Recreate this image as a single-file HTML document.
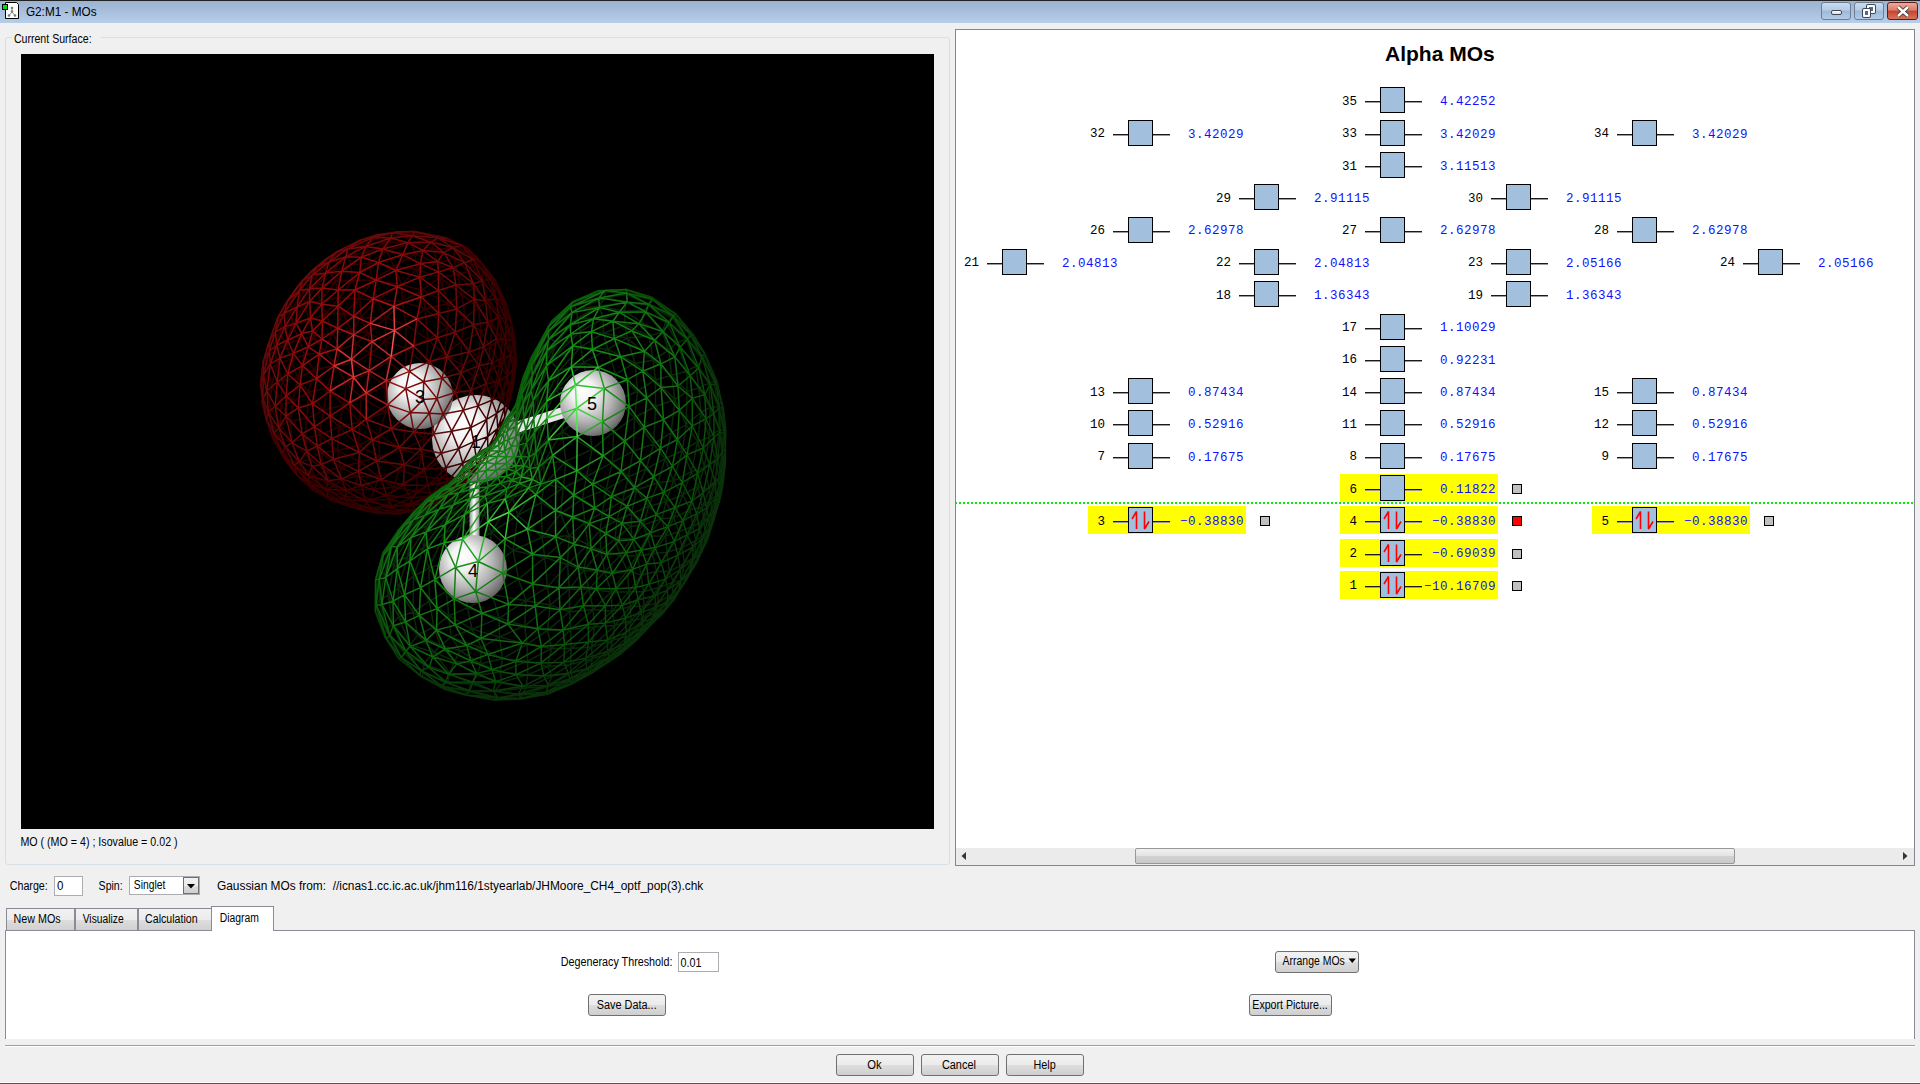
<!DOCTYPE html>
<html><head><meta charset="utf-8"><style>
*{margin:0;padding:0;box-sizing:border-box}
html,body{width:1920px;height:1084px;overflow:hidden;background:#f0f0f0;font-family:"Liberation Sans",sans-serif;font-size:12px;color:#000;position:relative}
.a{position:absolute}
.t{position:absolute;white-space:nowrap;line-height:14px}
#title{left:0;top:0;width:1920px;height:23px;background:linear-gradient(#9ab3d1,#b7cee8);border-top:1px solid #222}
#ttl{left:26px;top:4px;font-size:13px;color:#000;line-height:15px}
.wb{position:absolute;top:2px;height:18px;border:1px solid #6d7d92;border-radius:3px;background:linear-gradient(#c9dcef 0%,#b3cbe6 45%,#9db8d8 50%,#b2cbe6 100%)}
.wbc{background:linear-gradient(#eea99a 0%,#db7b68 45%,#c5452b 50%,#d9725c 100%);border-color:#5b1e1e}
#grp{left:5px;top:37px;width:945px;height:828px;border:1px solid #d5dfe5;border-radius:3px}
#canvas{left:21px;top:54px;width:913px;height:775px;background:#000;overflow:hidden}
#rp{left:955px;top:29px;width:960px;height:837px;border:1px solid #828790;background:#fff;overflow:hidden}
.yl{position:absolute;width:158px;height:28px;background:#ffff00}
.sq,.sqr{position:absolute;width:10px;height:10px;border:1px solid #000;background:#c0c0c0}
.sqr{background:#ff0000}
.ln{position:absolute;width:57px;height:2px;background:linear-gradient(#1a1a1a 50%,#9a9a9a 50%)}
.bx{position:absolute;width:25px;height:26px;border:1px solid #000;background:#a2c0de}
.ar{position:absolute}
.ar path{stroke:#f00;stroke-width:1.6;fill:none;stroke-linejoin:bevel}
.nm{position:absolute;width:60px;text-align:right;font-family:"Liberation Mono",monospace;font-size:12.5px;line-height:16px;color:#000;white-space:nowrap}
.en{position:absolute;width:100px;text-align:right;font-family:"Liberation Mono",monospace;font-size:12.5px;letter-spacing:0.5px;line-height:16px;color:#1010ff;white-space:nowrap}
.inp{position:absolute;background:#fff;border:1px solid #abadb3}
.btn{position:absolute;border:1px solid #707070;border-radius:3px;background:linear-gradient(#f2f2f2 0%,#ebebeb 50%,#dddddd 51%,#cfcfcf 100%);text-align:center;font-size:12px;line-height:19px}
.tab{position:absolute;top:908px;height:23px;border:1px solid #898c95;border-bottom:none;background:linear-gradient(#f2f2f2 0%,#ebebeb 50%,#dddddd 51%,#cfcfcf 100%);font-size:12px;line-height:20px;padding-left:7px}

</style></head><body>
<div id="title" class="a"></div>
<svg class="a" style="left:2px;top:2px" width="18" height="18"><path d="M3.5 0.5H14.5L16.5 2.5V16.5H3.5Z" fill="#fff" stroke="#000"/><circle cx="10" cy="6" r="1.3" fill="#777"/><circle cx="10" cy="9.5" r="1.3" fill="#777"/><circle cx="7" cy="13.5" r="1.3" fill="#777"/><circle cx="13" cy="13.5" r="1.3" fill="#777"/><path d="M10 6V10L7 13.5M10 10L13 13.5" stroke="#888" fill="none"/><rect x="0.5" y="2.5" width="5" height="5" fill="#00e000" stroke="#000"/></svg>
<div class="wb" style="left:1821px;width:30px"><div class="a" style="left:9px;top:7px;width:11px;height:5px;background:linear-gradient(#fff,#ddd);border:1px solid #3c4a5c;border-radius:2px"></div></div>
<div class="wb" style="left:1854px;width:30px"><div class="a" style="left:12px;top:2px;width:8px;height:8px;border:2px solid #fff;box-shadow:0 0 0 1px #3c4a5c;border-radius:1px;background:#5a6a7c"></div><div class="a" style="left:8px;top:6px;width:7px;height:8px;border:2px solid #fff;box-shadow:0 0 0 1px #3c4a5c;border-radius:1px;background:#5a6a7c"></div></div>
<div class="wb wbc" style="left:1887px;width:31px"><svg class="a" style="left:8px;top:2px" width="14" height="13"><path d="M2 2L12 11M12 2L2 11" stroke="#333" stroke-width="4"/><path d="M2 2L12 11M12 2L2 11" stroke="#fff" stroke-width="2.4"/></svg></div>
<div id="grp" class="a"></div>
<div class="a" style="left:12px;top:34px;width:89px;height:8px;background:#f0f0f0"></div>
<div id="canvas" class="a"><svg width="913" height="775" viewBox="21 54 913 775" style="position:absolute;left:0;top:0">
<defs><radialGradient id="sph" cx="0.42" cy="0.42" r="0.62" fx="0.33" fy="0.3"><stop offset="0" stop-color="#ffffff"/><stop offset="0.3" stop-color="#f2f2f2"/><stop offset="0.65" stop-color="#b4b4b4"/><stop offset="0.9" stop-color="#7c7c7c"/><stop offset="1" stop-color="#5e5e5e"/></radialGradient><linearGradient id="bnd" x1="0" y1="0" x2="1" y2="0"><stop offset="0" stop-color="#909090"/><stop offset="0.45" stop-color="#ffffff"/><stop offset="1" stop-color="#8a8a8a"/></linearGradient></defs>
<g fill="none" stroke-width="1.5">
<path stroke="#320000" d="M313.9 490.5L318.8 492.3M313.9 490.5L300 479M318.8 492.3L324.1 488.9M318.8 492.3L331.9 500.6M318.8 492.3L338.4 501.1M318.8 492.3L300 479M318.8 492.3L306.3 478.9M324.1 488.9L334.1 486.8M324.1 488.9L338.4 501.1M324.1 488.9L344.2 496.1M324.1 488.9L306.3 478.9M324.1 488.9L314 476.4M334.1 486.8L341.2 479M334.1 486.8L344.2 496.1M334.1 486.8L353.2 490M334.1 486.8L314 476.4M334.1 486.8L325.1 471.2M341.2 479L353.2 490M341.2 479L325.1 471.2M341.2 479L340.6 467.1M341.2 479L358.3 476.3M331.9 500.6L338.4 501.1M331.9 500.6L357.9 509.2M338.4 501.1L344.2 496.1M338.4 501.1L357.9 509.2M338.4 501.1L363.1 507.1M344.2 496.1L353.2 490M344.2 496.1L363.1 507.1M344.2 496.1L370.3 499.7M353.2 490L370.3 499.7M353.2 490L358.3 476.3M353.2 490L374.7 489M357.9 509.2L363.1 507.1M357.9 509.2L376.5 512.9M357.9 509.2L385.8 513M363.1 507.1L370.3 499.7M363.1 507.1L385.8 513M363.1 507.1L387.8 507.5M370.3 499.7L387.8 507.5M370.3 499.7L374.7 489M370.3 499.7L389.2 499.5M376.5 512.9L385.8 513M385.8 513L387.8 507.5M385.8 513L399.3 513.9M385.8 513L407.1 511M387.8 507.5L407.1 511M387.8 507.5L389.2 499.5M387.8 507.5L410 504M399.3 513.9L407.1 511M399.3 513.9L423.5 508.5M407.1 511L423.5 508.5M407.1 511L410 504M407.1 511L430 503.7M423.5 508.5L430 503.7M423.5 508.5L445.9 498.5M438.6 502.6L445.9 498.5M261.9 402.2L261.7 389.5M261.9 402.2L267.1 422.3M261.9 402.2L265 406.9M261.9 402.2L260.6 383.7M261.7 389.5L263.9 373.3M261.7 389.5L265 406.9M261.7 389.5L265.5 386.2M261.7 389.5L260.6 383.7M261.7 389.5L262.3 367.9M263.9 373.3L265.5 386.2M263.9 373.3L262.3 367.9M263.9 373.3L267.2 355.9M263.9 373.3L268.4 370.6M272.9 438.2L267.1 422.3M272.9 438.2L284.4 459.6M272.9 438.2L275.6 439.9M267.1 422.3L265 406.9M267.1 422.3L275.6 439.9M267.1 422.3L271.3 421.5M265 406.9L265.5 386.2M265 406.9L271.3 421.5M265 406.9L269.5 406M265.5 386.2L269.5 406M265.5 386.2L268.4 370.6M265.5 386.2L271.9 384.7M284.4 459.6L275.6 439.9M284.4 459.6L300 479M284.4 459.6L288.9 461.8M275.6 439.9L271.3 421.5M275.6 439.9L288.9 461.8M275.6 439.9L280.6 438.6M271.3 421.5L269.5 406M271.3 421.5L280.6 438.6M271.3 421.5L280.5 425.2M269.5 406L280.5 425.2M269.5 406L271.9 384.7M269.5 406L280.9 404.2M300 479L288.9 461.8M300 479L306.3 478.9M288.9 461.8L280.6 438.6M288.9 461.8L306.3 478.9M288.9 461.8L298.5 462.9M280.6 438.6L280.5 425.2M280.6 438.6L298.5 462.9M280.6 438.6L292 441.9M280.5 425.2L292 441.9M280.5 425.2L280.9 404.2M280.5 425.2L290.8 420.8M306.3 478.9L298.5 462.9M306.3 478.9L314 476.4M298.5 462.9L292 441.9M298.5 462.9L314 476.4M298.5 462.9L310.1 458.8M292 441.9L310.1 458.8M292 441.9L290.8 420.8M292 441.9L304.6 438.4M314 476.4L310.1 458.8M314 476.4L325.1 471.2M310.1 458.8L325.1 471.2M310.1 458.8L304.6 438.4M310.1 458.8L320.9 452.9M325.1 471.2L320.9 452.9M325.1 471.2L340.6 467.1M260.6 383.7L262.3 367.9M263.4 360.9L262.3 367.9M263.4 360.9L266.2 350.3M262.3 367.9L266.2 350.3M262.3 367.9L267.2 355.9M325.6 259.4L330.1 257.9M325.6 259.4L310.7 271.7M325.6 259.4L317.3 268.5M325.6 259.4L339.9 250M330.1 257.9L317.3 268.5M330.1 257.9L346.8 249M330.1 257.9L339.9 250M330.1 257.9L329.7 262.9M310.7 271.7L317.3 268.5M310.7 271.7L296.6 287.8M310.7 271.7L303.6 282.2M317.3 268.5L303.6 282.2M317.3 268.5L329.7 262.9M317.3 268.5L315.7 276.6M296.6 287.8L303.6 282.2M296.6 287.8L283.5 307M296.6 287.8L291.7 299.2M303.6 282.2L291.7 299.2M303.6 282.2L302.4 293M303.6 282.2L315.7 276.6M278.1 317L283.5 307M278.1 317L273.9 327.6M283.5 307L291.7 299.2M283.5 307L273.9 327.6M283.5 307L281.9 315.8M291.7 299.2L281.9 315.8M291.7 299.2L291.3 310.5M291.7 299.2L302.4 293M269.6 340.7L273.9 327.6M273.9 327.6L281.9 315.8M273.9 327.6L266.2 350.3M273.9 327.6L273.2 338.8M281.9 315.8L273.2 338.8M281.9 315.8L280.4 332.5M281.9 315.8L291.3 310.5M266.2 350.3L273.2 338.8M266.2 350.3L267.2 355.9M273.2 338.8L267.2 355.9M273.2 338.8L274.7 351.2M273.2 338.8L280.4 332.5M267.2 355.9L268.4 370.6M267.2 355.9L274.7 351.2M268.4 370.6L277.2 364.1M268.4 370.6L271.9 384.7M268.4 370.6L274.7 351.2M277.2 364.1L291.5 358.9M277.2 364.1L271.9 384.7M277.2 364.1L282.2 380.4M277.2 364.1L285.4 344.2M277.2 364.1L274.7 351.2M291.5 358.9L304.3 355.2M291.5 358.9L282.2 380.4M291.5 358.9L297.7 378M291.5 358.9L299.6 339.8M291.5 358.9L285.4 344.2M304.3 355.2L324.4 351.2M304.3 355.2L297.7 378M304.3 355.2L313.9 370.5M304.3 355.2L313.8 336.3M304.3 355.2L299.6 339.8M324.4 351.2L340.5 349.6M324.4 351.2L313.9 370.5M324.4 351.2L336.1 364.8M324.4 351.2L332.5 332.7M324.4 351.2L313.8 336.3M340.5 349.6L356.1 343.8M340.5 349.6L336.1 364.8M340.5 349.6L353.5 363.4M340.5 349.6L351.4 330.6M340.5 349.6L332.5 332.7M356.1 343.8L353.5 363.4M356.1 343.8L367.9 333.1M356.1 343.8L351.4 330.6M356.1 343.8L370.4 353.6M271.9 384.7L282.2 380.4M271.9 384.7L280.9 404.2M282.2 380.4L297.7 378M282.2 380.4L280.9 404.2M282.2 380.4L292.7 401.7M297.7 378L313.9 370.5M297.7 378L292.7 401.7M297.7 378L308.5 392M313.9 370.5L336.1 364.8M313.9 370.5L308.5 392M313.9 370.5L326.6 388.2M336.1 364.8L353.5 363.4M336.1 364.8L326.6 388.2M336.1 364.8L346.3 383.5M353.5 363.4L346.3 383.5M353.5 363.4L370.4 353.6M353.5 363.4L368.7 373.3M280.9 404.2L292.7 401.7M280.9 404.2L290.8 420.8M292.7 401.7L308.5 392M292.7 401.7L290.8 420.8M292.7 401.7L307 418.5M308.5 392L326.6 388.2M308.5 392L307 418.5M308.5 392L323.6 410.3M326.6 388.2L346.3 383.5M326.6 388.2L323.6 410.3M326.6 388.2L343.7 404.9M346.3 383.5L343.7 404.9M346.3 383.5L361.3 397.1M346.3 383.5L368.7 373.3M290.8 420.8L307 418.5M290.8 420.8L304.6 438.4M307 418.5L323.6 410.3M307 418.5L304.6 438.4M307 418.5L319.7 435M323.6 410.3L343.7 404.9M323.6 410.3L319.7 435M323.6 410.3L339 427.1M343.7 404.9L339 427.1M343.7 404.9L359.6 421.9M343.7 404.9L361.3 397.1M304.6 438.4L319.7 435M304.6 438.4L320.9 452.9M319.7 435L339 427.1M319.7 435L320.9 452.9M319.7 435L337.5 450.6M339 427.1L337.5 450.6M339 427.1L358.5 445.3M339 427.1L359.6 421.9M320.9 452.9L337.5 450.6M320.9 452.9L340.6 467.1M337.5 450.6L340.6 467.1M337.5 450.6L360.4 461.9M337.5 450.6L358.5 445.3M340.6 467.1L358.3 476.3M340.6 467.1L360.4 461.9M358.3 476.3L378.6 476.9M358.3 476.3L374.7 489M358.3 476.3L360.4 461.9M378.6 476.9L399.5 469.8M378.6 476.9L374.7 489M378.6 476.9L393.6 487.2M378.6 476.9L379.6 456.5M378.6 476.9L360.4 461.9M399.5 469.8L421.6 455.3M399.5 469.8L393.6 487.2M399.5 469.8L417.4 476.2M399.5 469.8L403.3 449.6M399.5 469.8L379.6 456.5M421.6 455.3L439.8 444.2M421.6 455.3L417.4 476.2M421.6 455.3L441.3 460.3M421.6 455.3L424.3 438.7M421.6 455.3L403.3 449.6M439.8 444.2L453.6 426.3M439.8 444.2L441.3 460.3M439.8 444.2L456.8 443.8M439.8 444.2L441.4 420.8M439.8 444.2L424.3 438.7M453.6 426.3L464.7 415.2M453.6 426.3L456.8 443.8M453.6 426.3L467.7 425.1M453.6 426.3L454.5 404.3M453.6 426.3L441.4 420.8M464.7 415.2L467.7 425.1M464.7 415.2L471.1 399.1M464.7 415.2L454.5 404.3M464.7 415.2L479 409.6M374.7 489L393.6 487.2M374.7 489L389.2 499.5M393.6 487.2L417.4 476.2M393.6 487.2L389.2 499.5M393.6 487.2L416.5 491.4M417.4 476.2L441.3 460.3M417.4 476.2L416.5 491.4M417.4 476.2L441.3 478.5M441.3 460.3L456.8 443.8M441.3 460.3L441.3 478.5M441.3 460.3L458.5 462M456.8 443.8L467.7 425.1M456.8 443.8L458.5 462M456.8 443.8L469.4 445.5M467.7 425.1L469.4 445.5M467.7 425.1L479 409.6M467.7 425.1L480.8 423.6M389.2 499.5L416.5 491.4M389.2 499.5L410 504M416.5 491.4L441.3 478.5M416.5 491.4L410 504M416.5 491.4L433.2 493.8M441.3 478.5L458.5 462M441.3 478.5L433.2 493.8M441.3 478.5L455.6 478.6M458.5 462L469.4 445.5M458.5 462L455.6 478.6M458.5 462L472.4 459.9M469.4 445.5L472.4 459.9M469.4 445.5L482 441.6M469.4 445.5L480.8 423.6M410 504L433.2 493.8M410 504L430 503.7M433.2 493.8L455.6 478.6M433.2 493.8L430 503.7M433.2 493.8L451.2 490.4M455.6 478.6L472.4 459.9M455.6 478.6L451.2 490.4M455.6 478.6L466.3 474.6M472.4 459.9L466.3 474.6M472.4 459.9L482.1 454.6M472.4 459.9L482 441.6M430 503.7L451.2 490.4M430 503.7L445.9 498.5M451.2 490.4L466.3 474.6M451.2 490.4L445.9 498.5M451.2 490.4L461.4 485.2M466.3 474.6L461.4 485.2M466.3 474.6L476.3 468.8M466.3 474.6L482.1 454.6M445.9 498.5L461.4 485.2M445.9 498.5L455.8 491.7M461.4 485.2L455.8 491.7M461.4 485.2L471 476.1M461.4 485.2L476.3 468.8M468.4 271.5L471.5 263.4M468.4 271.5L482.8 283.8M468.4 271.5L454.1 258.1M468.4 271.5L457.5 274.5M468.4 271.5L473.3 288.8M471.5 263.4L468.7 253.6M471.5 263.4L482.8 283.8M471.5 263.4L482.5 270.2M471.5 263.4L454.1 258.1M471.5 263.4L455.1 249.3M468.7 253.6L466.7 247.6M468.7 253.6L482.5 270.2M468.7 253.6L484.4 266.3M468.7 253.6L455.1 249.3M468.7 253.6L448.6 240.5M466.7 247.6L484.4 266.3M466.7 247.6L448.6 240.5M466.7 247.6L446.7 238.1M482.8 283.8L482.5 270.2M482.8 283.8L493.9 293.1M482.8 283.8L473.3 288.8M482.8 283.8L487.7 299.8M482.5 270.2L484.4 266.3M482.5 270.2L493.9 293.1M482.5 270.2L496.7 287.5M484.4 266.3L479.4 260.2M484.4 266.3L496.7 287.5M484.4 266.3L495.6 280.8M493.9 293.1L496.7 287.5M493.9 293.1L504.3 307.9M493.9 293.1L487.7 299.8M493.9 293.1L498.5 312.8M496.7 287.5L495.6 280.8M496.7 287.5L504.3 307.9M496.7 287.5L505.9 302.6M504.3 307.9L505.9 302.6M504.3 307.9L511.8 325.8M504.3 307.9L498.5 312.8M504.3 307.9L508.7 330M505.9 302.6L511.8 325.8M511.8 325.8L511 319.8M511.8 325.8L515.2 340.7M511.8 325.8L508.7 330M511.8 325.8L515.1 348.7M515.2 340.7L515.1 348.7M454.1 258.1L433.4 248.8M454.1 258.1L455.1 249.3M454.1 258.1L457.5 274.5M454.1 258.1L437.6 263.7M433.4 248.8L411.3 243M433.4 248.8L455.1 249.3M433.4 248.8L429.8 239.4M433.4 248.8L437.6 263.7M433.4 248.8L415.3 254.1M411.3 243L385.9 242M411.3 243L429.8 239.4M411.3 243L404.1 235.1M411.3 243L415.3 254.1M411.3 243L386.9 251.2M385.9 242L362.4 245.3M385.9 242L404.1 235.1M385.9 242L381.7 236.2M385.9 242L386.9 251.2M385.9 242L369.4 251.3M362.4 245.3L346.8 249M362.4 245.3L381.7 236.2M362.4 245.3L358.6 241.5M362.4 245.3L369.4 251.3M362.4 245.3L348.6 256.4M346.8 249L358.6 241.5M346.8 249L339.9 250M346.8 249L348.6 256.4M346.8 249L329.7 262.9M455.1 249.3L429.8 239.4M455.1 249.3L448.6 240.5M429.8 239.4L404.1 235.1M429.8 239.4L448.6 240.5M429.8 239.4L427.3 233.7M404.1 235.1L381.7 236.2M404.1 235.1L427.3 233.7M404.1 235.1L397.3 231.8M381.7 236.2L358.6 241.5M381.7 236.2L397.3 231.8M381.7 236.2L375.7 235.1M358.6 241.5L339.9 250M358.6 241.5L375.7 235.1M358.6 241.5L360.3 240.1M339.9 250L360.3 240.1M339.9 250L336.5 252M448.6 240.5L427.3 233.7M448.6 240.5L446.7 238.1M427.3 233.7L397.3 231.8M427.3 233.7L446.7 238.1M427.3 233.7L414.4 231.6M397.3 231.8L375.7 235.1M457.5 274.5L439.7 277.4M457.5 274.5L437.6 263.7M457.5 274.5L473.3 288.8M457.5 274.5L462 294.4M439.7 277.4L422 290.2M439.7 277.4L437.6 263.7M439.7 277.4L416.3 269.3M439.7 277.4L462 294.4M439.7 277.4L448.3 303.7M422 290.2L402.5 301.5M422 290.2L416.3 269.3M422 290.2L401.7 284.7M422 290.2L448.3 303.7M422 290.2L425.2 308.7M402.5 301.5L386 317.9M402.5 301.5L401.7 284.7M402.5 301.5L377.1 299.9M402.5 301.5L425.2 308.7M402.5 301.5L405.9 324.6M386 317.9L367.9 333.1M386 317.9L377.1 299.9M386 317.9L361 317.6M386 317.9L405.9 324.6M386 317.9L385 341.4M367.9 333.1L361 317.6M367.9 333.1L351.4 330.6M367.9 333.1L385 341.4M367.9 333.1L370.4 353.6M437.6 263.7L416.3 269.3M437.6 263.7L415.3 254.1M416.3 269.3L401.7 284.7M416.3 269.3L415.3 254.1M416.3 269.3L393.9 266.6M401.7 284.7L377.1 299.9M401.7 284.7L393.9 266.6M401.7 284.7L372.5 280.3M377.1 299.9L361 317.6M377.1 299.9L372.5 280.3M377.1 299.9L360 299.1M361 317.6L351.4 330.6M361 317.6L360 299.1M361 317.6L343.1 313.6M351.4 330.6L343.1 313.6M351.4 330.6L332.5 332.7M415.3 254.1L393.9 266.6M415.3 254.1L386.9 251.2M393.9 266.6L372.5 280.3M393.9 266.6L386.9 251.2M393.9 266.6L369.2 263.3M372.5 280.3L360 299.1M372.5 280.3L369.2 263.3M372.5 280.3L352.5 280.3M360 299.1L343.1 313.6M360 299.1L352.5 280.3M360 299.1L339 297.8M343.1 313.6L339 297.8M343.1 313.6L332.5 332.7M343.1 313.6L326.2 313.4M386.9 251.2L369.2 263.3M386.9 251.2L369.4 251.3M369.2 263.3L352.5 280.3M369.2 263.3L369.4 251.3M369.2 263.3L350.6 264.8M352.5 280.3L339 297.8M352.5 280.3L350.6 264.8M352.5 280.3L335.6 281.8M339 297.8L335.6 281.8M339 297.8L326.2 313.4M339 297.8L320.1 300.9M369.4 251.3L350.6 264.8M369.4 251.3L348.6 256.4M350.6 264.8L335.6 281.8M350.6 264.8L348.6 256.4M350.6 264.8L329.7 272M335.6 281.8L329.7 272M335.6 281.8L320.1 300.9M335.6 281.8L316.5 285.8M348.6 256.4L329.7 272M348.6 256.4L329.7 262.9M329.7 272L329.7 262.9M329.7 272L316.5 285.8M329.7 272L315.7 276.6M329.7 262.9L315.7 276.6M473.3 288.8L478.4 307.9M473.3 288.8L462 294.4M473.3 288.8L487.7 299.8M478.4 307.9L481.2 331.9M478.4 307.9L462 294.4M478.4 307.9L464.9 317.8M478.4 307.9L487.7 299.8M478.4 307.9L492.1 324M481.2 331.9L478.3 357.3M481.2 331.9L464.9 317.8M481.2 331.9L461.4 341.6M481.2 331.9L492.1 324M481.2 331.9L490.3 346M478.3 357.3L473.8 376.8M478.3 357.3L461.4 341.6M478.3 357.3L461.6 364.9M478.3 357.3L490.3 346M478.3 357.3L486.8 371.6M473.8 376.8L471.1 399.1M473.8 376.8L461.6 364.9M473.8 376.8L458.8 388.4M473.8 376.8L486.8 371.6M473.8 376.8L484.2 391.6M471.1 399.1L458.8 388.4M471.1 399.1L454.5 404.3M471.1 399.1L484.2 391.6M471.1 399.1L479 409.6M462 294.4L464.9 317.8M462 294.4L448.3 303.7M464.9 317.8L461.4 341.6M464.9 317.8L448.3 303.7M464.9 317.8L447.3 327.7M461.4 341.6L461.6 364.9M461.4 341.6L447.3 327.7M461.4 341.6L444.6 354.2M461.6 364.9L458.8 388.4M461.6 364.9L444.6 354.2M461.6 364.9L445 374.7M458.8 388.4L454.5 404.3M458.8 388.4L445 374.7M458.8 388.4L441.4 396.4M454.5 404.3L441.4 396.4M454.5 404.3L441.4 420.8M448.3 303.7L447.3 327.7M448.3 303.7L425.2 308.7M447.3 327.7L444.6 354.2M447.3 327.7L425.2 308.7M447.3 327.7L427.9 339.6M444.6 354.2L445 374.7M444.6 354.2L427.9 339.6M444.6 354.2L426.1 365.2M445 374.7L441.4 396.4M445 374.7L426.1 365.2M445 374.7L423.6 387.6M441.4 396.4L423.6 387.6M441.4 396.4L441.4 420.8M441.4 396.4L424.9 409.5M425.2 308.7L427.9 339.6M425.2 308.7L405.9 324.6M427.9 339.6L426.1 365.2M427.9 339.6L405.9 324.6M427.9 339.6L406 348.2M426.1 365.2L423.6 387.6M426.1 365.2L406 348.2M426.1 365.2L406 375.5M423.6 387.6L406 375.5M423.6 387.6L424.9 409.5M423.6 387.6L405.7 398M405.9 324.6L406 348.2M405.9 324.6L385 341.4M406 348.2L406 375.5M406 348.2L385 341.4M406 348.2L388.3 361.7M406 375.5L388.3 361.7M406 375.5L405.7 398M406 375.5L385 386.2M385 341.4L388.3 361.7M385 341.4L370.4 353.6M388.3 361.7L370.4 353.6M388.3 361.7L385 386.2M388.3 361.7L368.7 373.3M370.4 353.6L368.7 373.3M487.7 299.8L498.5 312.8M487.7 299.8L492.1 324M498.5 312.8L508.7 330M498.5 312.8L492.1 324M498.5 312.8L502.1 340M508.7 330L515.1 348.7M508.7 330L502.1 340M508.7 330L510.2 354.4M515.1 348.7L516 363.3M515.1 348.7L510.2 354.4M515.1 348.7L513.7 371.2M516 363.3L513.7 371.2M516 363.3L513.5 384.5M492.1 324L502.1 340M492.1 324L490.3 346M502.1 340L510.2 354.4M502.1 340L490.3 346M502.1 340L500 364.5M510.2 354.4L513.7 371.2M510.2 354.4L500 364.5M510.2 354.4L506.9 375.9M513.7 371.2L513.5 384.5M513.7 371.2L506.9 375.9M513.7 371.2L508.3 393.8M513.5 384.5L508.3 393.8M513.5 384.5L508.5 404.9M490.3 346L500 364.5M490.3 346L486.8 371.6M500 364.5L506.9 375.9M500 364.5L486.8 371.6M500 364.5L495.6 384.2M506.9 375.9L508.3 393.8M506.9 375.9L495.6 384.2M506.9 375.9L500 400M508.3 393.8L500 400M508.3 393.8L508.5 404.9M508.3 393.8L503 413.8M486.8 371.6L495.6 384.2M486.8 371.6L484.2 391.6M495.6 384.2L500 400M495.6 384.2L484.2 391.6M495.6 384.2L492.3 406M500 400L492.3 406M500 400L503 413.8M500 400L493.9 419.9M484.2 391.6L492.3 406M484.2 391.6L479 409.6M492.3 406L479 409.6M492.3 406L493.9 419.9M492.3 406L480.8 423.6M479 409.6L480.8 423.6M332.5 332.7L313.8 336.3M332.5 332.7L326.2 313.4M313.8 336.3L299.6 339.8M313.8 336.3L326.2 313.4M313.8 336.3L309 320.5M299.6 339.8L285.4 344.2M299.6 339.8L309 320.5M299.6 339.8L292.3 324.8M285.4 344.2L274.7 351.2M285.4 344.2L292.3 324.8M285.4 344.2L280.4 332.5M274.7 351.2L280.4 332.5M326.2 313.4L309 320.5M326.2 313.4L320.1 300.9M309 320.5L292.3 324.8M309 320.5L320.1 300.9M309 320.5L304.8 303.7M292.3 324.8L280.4 332.5M292.3 324.8L304.8 303.7M292.3 324.8L291.3 310.5M280.4 332.5L291.3 310.5M320.1 300.9L304.8 303.7M320.1 300.9L316.5 285.8M304.8 303.7L291.3 310.5M304.8 303.7L316.5 285.8M304.8 303.7L302.4 293M291.3 310.5L302.4 293M316.5 285.8L302.4 293M316.5 285.8L315.7 276.6M302.4 293L315.7 276.6M441.4 420.8L424.3 438.7M441.4 420.8L424.9 409.5M424.3 438.7L403.3 449.6M424.3 438.7L424.9 409.5M424.3 438.7L405.3 423.1M403.3 449.6L379.6 456.5M403.3 449.6L405.3 423.1M403.3 449.6L378.5 435.4M379.6 456.5L360.4 461.9M379.6 456.5L378.5 435.4M379.6 456.5L358.5 445.3M360.4 461.9L358.5 445.3M424.9 409.5L405.3 423.1M424.9 409.5L405.7 398M405.3 423.1L378.5 435.4M405.3 423.1L405.7 398M405.3 423.1L385.8 412.1M378.5 435.4L358.5 445.3M378.5 435.4L385.8 412.1M378.5 435.4L359.6 421.9M358.5 445.3L359.6 421.9M405.7 398L385.8 412.1M405.7 398L385 386.2M385.8 412.1L359.6 421.9M385.8 412.1L385 386.2M385.8 412.1L361.3 397.1M359.6 421.9L361.3 397.1M385 386.2L361.3 397.1M385 386.2L368.7 373.3M361.3 397.1L368.7 373.3M510.5 396.8L508.5 404.9M496.1 437.2L492 445.1M483.9 459.5L492 445.1M483.9 459.5L476.3 468.8M471 476.1L476.3 468.8M508.5 404.9L500.5 428.3M508.5 404.9L503 413.8M500.5 428.3L492 445.1M500.5 428.3L503 413.8M500.5 428.3L493.2 434.5M492 445.1L476.3 468.8M492 445.1L493.2 434.5M492 445.1L482.1 454.6M476.3 468.8L482.1 454.6M503 413.8L493.2 434.5M503 413.8L493.9 419.9M493.2 434.5L482.1 454.6M493.2 434.5L493.9 419.9M493.2 434.5L482 441.6M482.1 454.6L482 441.6M493.9 419.9L482 441.6M493.9 419.9L480.8 423.6M482 441.6L480.8 423.6"/>
<path stroke="#0a280a" d="M620.9 653.6L609.8 661.4M620.9 653.6L620.6 652.7M636.2 640.5L620.6 652.7M636.2 640.5L647.1 628.9M636.2 640.5L638.6 636M445.3 689.6L439.6 685.5M445.3 689.6L462.8 694.5M445.3 689.6L422 677.2M439.6 685.5L447.6 682.6M439.6 685.5L462.8 694.5M439.6 685.5L468.7 691.6M439.6 685.5L422 677.2M439.6 685.5L423.5 672.4M447.6 682.6L449.7 673.3M447.6 682.6L468.7 691.6M447.6 682.6L470.9 683.9M447.6 682.6L423.5 672.4M447.6 682.6L423.6 664M449.7 673.3L454.7 661.2M449.7 673.3L470.9 683.9M449.7 673.3L477.4 675.4M449.7 673.3L423.6 664M449.7 673.3L434.3 652.1M454.7 661.2L460.3 650.6M454.7 661.2L477.4 675.4M454.7 661.2L480.4 663.8M454.7 661.2L434.3 652.1M454.7 661.2L440.5 645.5M460.3 650.6L480.4 663.8M460.3 650.6L440.5 645.5M460.3 650.6L451.1 637.2M460.3 650.6L481.3 647.6M462.8 694.5L468.7 691.6M462.8 694.5L494.5 699.9M462.8 694.5L495.1 698M468.7 691.6L470.9 683.9M468.7 691.6L495.1 698M468.7 691.6L494.8 691.2M470.9 683.9L477.4 675.4M470.9 683.9L494.8 691.2M470.9 683.9L502.2 682.1M477.4 675.4L480.4 663.8M477.4 675.4L502.2 682.1M477.4 675.4L500.1 672M480.4 663.8L500.1 672M480.4 663.8L481.3 647.6M480.4 663.8L502.5 658.8M494.5 699.9L495.1 698M494.5 699.9L521.7 698.9M495.1 698L494.8 691.2M495.1 698L521.7 698.9M495.1 698L521.8 695.1M494.8 691.2L502.2 682.1M494.8 691.2L521.8 695.1M494.8 691.2L526 688M502.2 682.1L500.1 672M502.2 682.1L526 688M502.2 682.1L527.6 674.8M500.1 672L527.6 674.8M500.1 672L502.5 658.8M500.1 672L527.6 661.1M521.7 698.9L521.8 695.1M521.7 698.9L547.8 694.1M521.7 698.9L545.7 693.3M521.8 695.1L526 688M521.8 695.1L545.7 693.3M521.8 695.1L547.4 686.7M526 688L527.6 674.8M526 688L547.4 686.7M526 688L552.1 676.2M527.6 674.8L552.1 676.2M527.6 674.8L527.6 661.1M527.6 674.8L547.7 666.5M547.8 694.1L545.7 693.3M547.8 694.1L572 684.1M545.7 693.3L547.4 686.7M545.7 693.3L572 684.1M545.7 693.3L573 680.6M547.4 686.7L552.1 676.2M547.4 686.7L573 680.6M547.4 686.7L571.3 673.1M552.1 676.2L571.3 673.1M552.1 676.2L547.7 666.5M552.1 676.2L570.4 664.4M572 684.1L573 680.6M572 684.1L591.3 673.3M572 684.1L591.7 671.9M573 680.6L571.3 673.1M573 680.6L591.7 671.9M573 680.6L590.4 668M571.3 673.1L590.4 668M571.3 673.1L570.4 664.4M571.3 673.1L592.3 658.8M591.3 673.3L591.7 671.9M591.3 673.3L609.8 661.4M591.7 671.9L590.4 668M591.7 671.9L609.8 661.4M591.7 671.9L607.8 659.5M590.4 668L607.8 659.5M590.4 668L592.3 658.8M590.4 668L609.3 653M609.8 661.4L607.8 659.5M609.8 661.4L620.6 652.7M607.8 659.5L620.6 652.7M607.8 659.5L609.3 653M607.8 659.5L624.3 646.6M620.6 652.7L624.3 646.6M620.6 652.7L638.6 636M411.2 514.9L424.5 501M411.2 514.9L397.2 531.4M411.2 514.9L414.1 512.2M424.5 501L414.1 512.2M424.5 501L441.8 487.9M424.5 501L430.7 496.4M383.1 552.6L397.2 531.4M383.1 552.6L375.6 578.7M383.1 552.6L384 552.3M397.2 531.4L414.1 512.2M397.2 531.4L384 552.3M397.2 531.4L399.3 530.8M414.1 512.2L399.3 530.8M414.1 512.2L430.7 496.4M414.1 512.2L423 504.6M375.3 611.4L375.6 578.7M375.3 611.4L384.4 636M375.3 611.4L376 606.8M375.6 578.7L384 552.3M375.6 578.7L376 606.8M375.6 578.7L378.8 574.9M384 552.3L399.3 530.8M384 552.3L378.8 574.9M384 552.3L390.5 547M399.3 530.8L390.5 547M399.3 530.8L423 504.6M399.3 530.8L412.3 519.4M398.7 658.7L384.4 636M398.7 658.7L422 677.2M398.7 658.7L400.4 657.3M384.4 636L376 606.8M384.4 636L400.4 657.3M384.4 636L385.9 629.9M376 606.8L378.8 574.9M376 606.8L385.9 629.9M376 606.8L379.5 599.8M378.8 574.9L390.5 547M378.8 574.9L379.5 599.8M378.8 574.9L384.9 572.7M390.5 547L384.9 572.7M390.5 547L412.3 519.4M390.5 547L399.8 540.7M422 677.2L400.4 657.3M422 677.2L423.5 672.4M400.4 657.3L385.9 629.9M400.4 657.3L423.5 672.4M400.4 657.3L404.7 653.5M385.9 629.9L379.5 599.8M385.9 629.9L404.7 653.5M385.9 629.9L392.3 624.1M379.5 599.8L384.9 572.7M379.5 599.8L392.3 624.1M379.5 599.8L388.3 595.1M384.9 572.7L388.3 595.1M384.9 572.7L399.8 540.7M384.9 572.7L394.4 562M423.5 672.4L404.7 653.5M423.5 672.4L423.6 664M404.7 653.5L392.3 624.1M404.7 653.5L423.6 664M404.7 653.5L410.1 645.3M392.3 624.1L388.3 595.1M392.3 624.1L410.1 645.3M392.3 624.1L398.6 616.7M388.3 595.1L398.6 616.7M388.3 595.1L394.4 562M388.3 595.1L398.4 588.4M423.6 664L410.1 645.3M423.6 664L434.3 652.1M410.1 645.3L398.6 616.7M410.1 645.3L434.3 652.1M410.1 645.3L417.7 634.9M398.6 616.7L417.7 634.9M398.6 616.7L398.4 588.4M398.6 616.7L413 612.1M434.3 652.1L417.7 634.9M434.3 652.1L440.5 645.5M417.7 634.9L440.5 645.5M417.7 634.9L413 612.1M417.7 634.9L433.9 627.3M440.5 645.5L433.9 627.3M440.5 645.5L451.1 637.2M647.1 628.9L662.6 613.5M647.1 628.9L638.6 636M647.1 628.9L652.8 620.8M662.6 613.5L673.5 600.3M662.6 613.5L663.9 609.9M662.6 613.5L652.8 620.8M673.5 600.3L686.4 579.9M673.5 600.3L679 590.4M673.5 600.3L663.9 609.9M686.4 579.9L696.9 562M686.4 579.9L690 571.6M686.4 579.9L679 590.4M696.9 562L703.8 546.8M696.9 562L690 571.6M707.7 539.1L711.1 527.5M707.7 539.1L703.8 546.8M713.6 520.6L717.5 506.2M713.6 520.6L711.1 527.5M719.3 501.5L721.9 487.4M719.3 501.5L717.5 506.2M722.8 485.6L721.9 487.4M505.9 419.3L504.4 421.9M500.9 427.7L504.4 421.9M500.9 427.7L499.7 430.8M497 436.8L495.9 441.8M497 436.8L499.7 430.8M491.2 445.6L487.4 447.9M491.2 445.6L495.9 441.8M481.3 451L472.5 457.6M481.3 451L476.5 454.9M481.3 451L487.4 447.9M472.5 457.6L462.8 467.8M472.5 457.6L468.3 462.4M472.5 457.6L476.5 454.9M462.8 467.8L455.8 477.8M462.8 467.8L459.5 473.1M462.8 467.8L468.3 462.4M455.8 477.8L441.8 487.9M455.8 477.8L450.3 483.7M455.8 477.8L459.5 473.1M441.8 487.9L430.7 496.4M441.8 487.9L450.3 483.7M430.7 496.4L440.9 490.7M430.7 496.4L423 504.6M430.7 496.4L450.3 483.7M440.9 490.7L454.1 485.3M440.9 490.7L423 504.6M440.9 490.7L431.9 499.6M440.9 490.7L457.8 479.4M440.9 490.7L450.3 483.7M454.1 485.3L465.2 481.1M454.1 485.3L431.9 499.6M454.1 485.3L442.8 495.5M454.1 485.3L465.1 473.5M454.1 485.3L457.8 479.4M465.2 481.1L474.3 477.9M465.2 481.1L442.8 495.5M465.2 481.1L459.2 488.6M465.2 481.1L472.1 471.5M465.2 481.1L465.1 473.5M474.3 477.9L484.7 475.3M474.3 477.9L459.2 488.6M474.3 477.9L473.5 486.2M474.3 477.9L482.8 467.7M474.3 477.9L472.1 471.5M484.7 475.3L492.8 473.2M484.7 475.3L473.5 486.2M484.7 475.3L488.9 481.3M484.7 475.3L493.4 465.7M484.7 475.3L482.8 467.7M492.8 473.2L503.6 470M492.8 473.2L488.9 481.3M492.8 473.2L498.6 479M492.8 473.2L502.9 465.2M492.8 473.2L493.4 465.7M503.6 470L513.1 470.2M503.6 470L498.6 479M503.6 470L508.8 476.4M503.6 470L512.1 464.7M503.6 470L502.9 465.2M513.1 470.2L508.8 476.4M513.1 470.2L521.5 465.7M513.1 470.2L512.1 464.7M513.1 470.2L521.1 473.5M423 504.6L431.9 499.6M423 504.6L412.3 519.4M431.9 499.6L442.8 495.5M431.9 499.6L412.3 519.4M431.9 499.6L421 514.8M442.8 495.5L459.2 488.6M442.8 495.5L421 514.8M442.8 495.5L438.1 504M459.2 488.6L473.5 486.2M459.2 488.6L438.1 504M459.2 488.6L450.3 502.5M473.5 486.2L488.9 481.3M473.5 486.2L450.3 502.5M473.5 486.2L471 494.3M488.9 481.3L498.6 479M488.9 481.3L471 494.3M488.9 481.3L487.6 489.7M498.6 479L508.8 476.4M498.6 479L487.6 489.7M498.6 479L506 484.4M508.8 476.4L506 484.4M508.8 476.4L521.1 473.5M508.8 476.4L516.1 480.7M412.3 519.4L421 514.8M412.3 519.4L399.8 540.7M421 514.8L438.1 504M421 514.8L399.8 540.7M421 514.8L411.6 531.7M438.1 504L450.3 502.5M438.1 504L411.6 531.7M438.1 504L427.2 525.7M450.3 502.5L471 494.3M450.3 502.5L427.2 525.7M450.3 502.5L447.4 515.7M471 494.3L487.6 489.7M471 494.3L447.4 515.7M471 494.3L465 507.2M487.6 489.7L506 484.4M487.6 489.7L465 507.2M487.6 489.7L483.4 500.2M506 484.4L483.4 500.2M506 484.4L503.3 493.8M506 484.4L516.1 480.7M399.8 540.7L411.6 531.7M399.8 540.7L394.4 562M411.6 531.7L427.2 525.7M411.6 531.7L394.4 562M411.6 531.7L407.3 556.9M427.2 525.7L447.4 515.7M427.2 525.7L407.3 556.9M427.2 525.7L423.2 547.7M447.4 515.7L465 507.2M447.4 515.7L423.2 547.7M447.4 515.7L444.5 533.6M465 507.2L483.4 500.2M465 507.2L444.5 533.6M465 507.2L461.9 524.4M483.4 500.2L461.9 524.4M483.4 500.2L484.5 513.8M483.4 500.2L503.3 493.8M394.4 562L407.3 556.9M394.4 562L398.4 588.4M407.3 556.9L423.2 547.7M407.3 556.9L398.4 588.4M407.3 556.9L413.6 576.2M423.2 547.7L444.5 533.6M423.2 547.7L413.6 576.2M423.2 547.7L428.9 568.4M444.5 533.6L461.9 524.4M444.5 533.6L428.9 568.4M444.5 533.6L447.7 561.1M461.9 524.4L447.7 561.1M461.9 524.4L471.3 544.3M461.9 524.4L484.5 513.8M398.4 588.4L413.6 576.2M398.4 588.4L413 612.1M413.6 576.2L428.9 568.4M413.6 576.2L413 612.1M413.6 576.2L429.3 601.1M428.9 568.4L447.7 561.1M428.9 568.4L429.3 601.1M428.9 568.4L446.2 591.7M447.7 561.1L446.2 591.7M447.7 561.1L463.4 580M447.7 561.1L471.3 544.3M413 612.1L429.3 601.1M413 612.1L433.9 627.3M429.3 601.1L446.2 591.7M429.3 601.1L433.9 627.3M429.3 601.1L448.9 615.7M446.2 591.7L448.9 615.7M446.2 591.7L467.5 607.9M446.2 591.7L463.4 580M433.9 627.3L448.9 615.7M433.9 627.3L451.1 637.2M448.9 615.7L451.1 637.2M448.9 615.7L472 629.1M448.9 615.7L467.5 607.9M451.1 637.2L481.3 647.6M451.1 637.2L472 629.1M481.3 647.6L499.5 637M481.3 647.6L502.5 658.8M481.3 647.6L472 629.1M499.5 637L524.7 625.8M499.5 637L502.5 658.8M499.5 637L527 644.3M499.5 637L499.1 618.3M499.5 637L472 629.1M524.7 625.8L550.3 605.1M524.7 625.8L527 644.3M524.7 625.8L547.5 630.4M524.7 625.8L526 600.7M524.7 625.8L499.1 618.3M550.3 605.1L569.3 589M550.3 605.1L547.5 630.4M550.3 605.1L569.6 611.9M550.3 605.1L547.4 587.1M550.3 605.1L526 600.7M569.3 589L584 570.3M569.3 589L569.6 611.9M569.3 589L589.1 589.1M569.3 589L567.5 564.5M569.3 589L547.4 587.1M584 570.3L600.6 550.5M584 570.3L589.1 589.1M584 570.3L604.6 571.7M584 570.3L587.8 544.5M584 570.3L567.5 564.5M600.6 550.5L615 539M600.6 550.5L604.6 571.7M600.6 550.5L620.1 555.5M600.6 550.5L600.2 529.9M600.6 550.5L587.8 544.5M615 539L631.1 526.3M615 539L620.1 555.5M615 539L631.5 538.6M615 539L617 520M615 539L600.2 529.9M631.1 526.3L631.5 538.6M631.1 526.3L631.6 513.8M631.1 526.3L617 520M631.1 526.3L643.2 524.9M502.5 658.8L527 644.3M502.5 658.8L527.6 661.1M527 644.3L547.5 630.4M527 644.3L527.6 661.1M527 644.3L551.6 648.4M547.5 630.4L569.6 611.9M547.5 630.4L551.6 648.4M547.5 630.4L570.7 629.6M569.6 611.9L589.1 589.1M569.6 611.9L570.7 629.6M569.6 611.9L593 609.6M589.1 589.1L604.6 571.7M589.1 589.1L593 609.6M589.1 589.1L611.2 592M604.6 571.7L620.1 555.5M604.6 571.7L611.2 592M604.6 571.7L627.5 570.4M620.1 555.5L631.5 538.6M620.1 555.5L627.5 570.4M620.1 555.5L637.1 556M631.5 538.6L637.1 556M631.5 538.6L643.2 524.9M631.5 538.6L647.1 536M527.6 661.1L551.6 648.4M527.6 661.1L547.7 666.5M551.6 648.4L570.7 629.6M551.6 648.4L547.7 666.5M551.6 648.4L571.2 648.6M570.7 629.6L593 609.6M570.7 629.6L571.2 648.6M570.7 629.6L594.6 627.1M593 609.6L611.2 592M593 609.6L594.6 627.1M593 609.6L612 611.3M611.2 592L627.5 570.4M611.2 592L612 611.3M611.2 592L628.8 591.7M627.5 570.4L637.1 556M627.5 570.4L628.8 591.7M627.5 570.4L641.2 575.1M637.1 556L641.2 575.1M637.1 556L652.3 553.8M637.1 556L647.1 536M547.7 666.5L571.2 648.6M547.7 666.5L570.4 664.4M571.2 648.6L594.6 627.1M571.2 648.6L570.4 664.4M571.2 648.6L591.6 647.1M594.6 627.1L612 611.3M594.6 627.1L591.6 647.1M594.6 627.1L614.8 625.5M612 611.3L628.8 591.7M612 611.3L614.8 625.5M612 611.3L630.2 606.7M628.8 591.7L641.2 575.1M628.8 591.7L630.2 606.7M628.8 591.7L643.4 591.7M641.2 575.1L643.4 591.7M641.2 575.1L656.5 571.6M641.2 575.1L652.3 553.8M570.4 664.4L591.6 647.1M570.4 664.4L592.3 658.8M591.6 647.1L614.8 625.5M591.6 647.1L592.3 658.8M591.6 647.1L612.7 640.3M614.8 625.5L630.2 606.7M614.8 625.5L612.7 640.3M614.8 625.5L631.1 620.8M630.2 606.7L643.4 591.7M630.2 606.7L631.1 620.8M630.2 606.7L643.9 606.1M643.4 591.7L643.9 606.1M643.4 591.7L659.1 587.6M643.4 591.7L656.5 571.6M592.3 658.8L612.7 640.3M592.3 658.8L609.3 653M612.7 640.3L631.1 620.8M612.7 640.3L609.3 653M612.7 640.3L628.8 635.9M631.1 620.8L643.9 606.1M631.1 620.8L628.8 635.9M631.1 620.8L643.3 618.2M643.9 606.1L643.3 618.2M643.9 606.1L657.4 603.1M643.9 606.1L659.1 587.6M609.3 653L628.8 635.9M609.3 653L624.3 646.6M628.8 635.9L643.3 618.2M628.8 635.9L624.3 646.6M628.8 635.9L642.3 627.3M643.3 618.2L642.3 627.3M643.3 618.2L656.4 612.2M643.3 618.2L657.4 603.1M624.3 646.6L642.3 627.3M624.3 646.6L638.6 636M642.3 627.3L638.6 636M642.3 627.3L652.8 620.8M642.3 627.3L656.4 612.2M638.6 636L652.8 620.8M641.8 322.4L643.9 310.3M641.8 322.4L662.3 332.1M641.8 322.4L624.4 311.2M641.8 322.4L625.3 325M641.8 322.4L649.1 335.9M643.9 310.3L648.9 305.3M643.9 310.3L662.3 332.1M643.9 310.3L665.7 322.4M643.9 310.3L624.4 311.2M643.9 310.3L626 302.8M648.9 305.3L653.1 299.8M648.9 305.3L665.7 322.4M648.9 305.3L672.9 318M648.9 305.3L626 302.8M648.9 305.3L627.3 294.4M653.1 299.8L652 297.3M653.1 299.8L672.9 318M653.1 299.8L676.4 315M653.1 299.8L627.3 294.4M653.1 299.8L626.6 290M652 297.3L676.4 315M652 297.3L626.6 290M662.3 332.1L665.7 322.4M662.3 332.1L677.3 342.5M662.3 332.1L649.1 335.9M662.3 332.1L668.6 350.1M665.7 322.4L672.9 318M665.7 322.4L677.3 342.5M665.7 322.4L686.5 339.3M672.9 318L676.4 315M672.9 318L686.5 339.3M672.9 318L689.6 333.9M676.4 315L675.6 313.8M676.4 315L689.6 333.9M676.4 315L693.8 335.3M677.3 342.5L686.5 339.3M677.3 342.5L696 366.1M677.3 342.5L668.6 350.1M677.3 342.5L686.9 371M686.5 339.3L689.6 333.9M686.5 339.3L696 366.1M686.5 339.3L703.6 360.6M689.6 333.9L693.8 335.3M689.6 333.9L703.6 360.6M689.6 333.9L704.3 353.4M693.8 335.3L704.3 353.4M696 366.1L703.6 360.6M696 366.1L708.9 383.1M696 366.1L686.9 371M696 366.1L698.7 387.9M703.6 360.6L704.3 353.4M703.6 360.6L708.9 383.1M703.6 360.6L714.1 381.4M704.3 353.4L704.9 353.6M704.3 353.4L714.1 381.4M704.3 353.4L716.5 380.5M708.9 383.1L714.1 381.4M708.9 383.1L718.2 406.6M708.9 383.1L698.7 387.9M708.9 383.1L710.1 407.7M714.1 381.4L716.5 380.5M714.1 381.4L718.2 406.6M714.1 381.4L721.3 401M716.5 380.5L721.3 401M718.2 406.6L721.3 401M718.2 406.6L723.5 430.6M718.2 406.6L710.1 407.7M718.2 406.6L719.3 429.7M721.3 401L723.4 408.7M721.3 401L723.5 430.6M721.3 401L725.7 429.4M723.5 430.6L725.7 429.4M723.5 430.6L725.1 449.4M723.5 430.6L719.3 429.7M723.5 430.6L721.9 452.8M725.7 429.4L725.1 449.4M725.1 449.4L725.4 448.3M725.1 449.4L725.4 462.7M725.1 449.4L721.9 452.8M725.1 449.4L722.8 472.9M725.4 462.7L722.8 472.9M725.4 462.7L721.9 487.4M624.4 311.2L599.1 306.1M624.4 311.2L626 302.8M624.4 311.2L625.3 325M624.4 311.2L603.2 318.6M599.1 306.1L576.1 309.6M599.1 306.1L626 302.8M599.1 306.1L605 297.6M599.1 306.1L603.2 318.6M599.1 306.1L577.6 318.4M576.1 309.6L549.3 330.6M576.1 309.6L605 297.6M576.1 309.6L574.5 305.4M576.1 309.6L577.6 318.4M576.1 309.6L550.4 338.2M549.3 330.6L533.3 357.4M549.3 330.6L574.5 305.4M549.3 330.6L550.4 324.7M549.3 330.6L550.4 338.2M549.3 330.6L535.3 360M533.3 357.4L522.3 382M533.3 357.4L550.4 324.7M533.3 357.4L531.6 357.1M533.3 357.4L535.3 360M533.3 357.4L522.9 386.6M522.3 382L516.5 403.1M522.3 382L531.6 357.1M522.3 382L523.1 377.5M522.3 382L522.9 386.6M522.3 382L515.8 408.6M516.5 403.1L511.5 411.8M516.5 403.1L523.1 377.5M516.5 403.1L515.9 404.5M516.5 403.1L515.8 408.6M516.5 403.1L510.7 413.7M511.5 411.8L510.7 413.7M511.5 411.8L504.4 421.9M626 302.8L605 297.6M626 302.8L627.3 294.4M605 297.6L574.5 305.4M605 297.6L627.3 294.4M605 297.6L605 291.6M574.5 305.4L550.4 324.7M574.5 305.4L605 291.6M574.5 305.4L575.6 300.2M550.4 324.7L531.6 357.1M550.4 324.7L575.6 300.2M550.4 324.7L551.8 321.1M531.6 357.1L523.1 377.5M531.6 357.1L551.8 321.1M531.6 357.1L531.4 357.4M627.3 294.4L605 291.6M627.3 294.4L626.6 290M605 291.6L575.6 300.2M605 291.6L626.6 290M605 291.6L598.3 290.8M575.6 300.2L551.8 321.1M575.6 300.2L598.3 290.8M575.6 300.2L572.3 302.3M626.6 290L598.3 290.8M626.6 290L626.5 289.5M625.3 325L603.4 333.2M625.3 325L603.2 318.6M625.3 325L649.1 335.9M625.3 325L627.1 338.1M603.4 333.2L580.9 346.9M603.4 333.2L603.2 318.6M603.4 333.2L579.9 331.6M603.4 333.2L627.1 338.1M603.4 333.2L607.9 349.3M580.9 346.9L559.2 370.7M580.9 346.9L579.9 331.6M580.9 346.9L550.6 360.8M580.9 346.9L607.9 349.3M580.9 346.9L583.4 362.7M559.2 370.7L536.4 415.7M559.2 370.7L550.6 360.8M559.2 370.7L539.1 391M559.2 370.7L583.4 362.7M559.2 370.7L556.6 389.3M536.4 415.7L530.8 443.4M536.4 415.7L539.1 391M536.4 415.7L528.4 425.4M536.4 415.7L556.6 389.3M536.4 415.7L541.3 420.9M530.8 443.4L524.7 457.2M530.8 443.4L528.4 425.4M530.8 443.4L522.5 447M530.8 443.4L541.3 420.9M530.8 443.4L533.4 456.4M524.7 457.2L521.5 465.7M524.7 457.2L522.5 447M524.7 457.2L518.1 456.2M524.7 457.2L533.4 456.4M524.7 457.2L526.8 466.8M521.5 465.7L518.1 456.2M521.5 465.7L512.1 464.7M521.5 465.7L526.8 466.8M521.5 465.7L521.1 473.5M603.2 318.6L579.9 331.6M603.2 318.6L577.6 318.4M579.9 331.6L550.6 360.8M579.9 331.6L577.6 318.4M579.9 331.6L556.1 342.4M550.6 360.8L539.1 391M550.6 360.8L556.1 342.4M550.6 360.8L537.4 378.7M539.1 391L528.4 425.4M539.1 391L537.4 378.7M539.1 391L526.4 413.8M528.4 425.4L522.5 447M528.4 425.4L526.4 413.8M528.4 425.4L521.4 435M522.5 447L518.1 456.2M522.5 447L521.4 435M522.5 447L515.2 447.1M518.1 456.2L512.1 464.7M518.1 456.2L515.2 447.1M518.1 456.2L511 459M512.1 464.7L511 459M512.1 464.7L502.9 465.2M577.6 318.4L556.1 342.4M577.6 318.4L550.4 338.2M556.1 342.4L537.4 378.7M556.1 342.4L550.4 338.2M556.1 342.4L534.6 369.2M537.4 378.7L526.4 413.8M537.4 378.7L534.6 369.2M537.4 378.7L524.4 404M526.4 413.8L521.4 435M526.4 413.8L524.4 404M526.4 413.8L518.9 426.8M521.4 435L515.2 447.1M521.4 435L518.9 426.8M521.4 435L512.1 440.5M515.2 447.1L511 459M515.2 447.1L512.1 440.5M515.2 447.1L508.7 451M511 459L508.7 451M511 459L502.9 465.2M511 459L502.3 459.1M550.4 338.2L534.6 369.2M550.4 338.2L535.3 360M534.6 369.2L524.4 404M534.6 369.2L535.3 360M534.6 369.2L523.3 393.7M524.4 404L518.9 426.8M524.4 404L523.3 393.7M524.4 404L517 420.2M518.9 426.8L512.1 440.5M518.9 426.8L517 420.2M518.9 426.8L510.4 430.7M512.1 440.5L508.7 451M512.1 440.5L510.4 430.7M512.1 440.5L506.3 443M508.7 451L506.3 443M508.7 451L502.3 459.1M508.7 451L501.7 453.1M535.3 360L523.3 393.7M535.3 360L522.9 386.6M523.3 393.7L517 420.2M523.3 393.7L522.9 386.6M523.3 393.7L516.1 413.3M517 420.2L510.4 430.7M517 420.2L516.1 413.3M517 420.2L508.7 424.9M510.4 430.7L506.3 443M510.4 430.7L508.7 424.9M510.4 430.7L504.2 436.2M506.3 443L504.2 436.2M506.3 443L501.7 453.1M506.3 443L500.7 447.9M522.9 386.6L516.1 413.3M522.9 386.6L515.8 408.6M516.1 413.3L508.7 424.9M516.1 413.3L515.8 408.6M516.1 413.3L508.4 419.8M508.7 424.9L504.2 436.2M508.7 424.9L508.4 419.8M508.7 424.9L503.4 430.4M504.2 436.2L503.4 430.4M504.2 436.2L500.7 447.9M504.2 436.2L499.6 440.3M515.8 408.6L508.4 419.8M515.8 408.6L510.7 413.7M508.4 419.8L503.4 430.4M508.4 419.8L510.7 413.7M508.4 419.8L503.7 425.3M503.4 430.4L503.7 425.3M503.4 430.4L499.6 440.3M503.4 430.4L499.3 434.7M510.7 413.7L503.7 425.3M510.7 413.7L504.4 421.9M503.7 425.3L504.4 421.9M503.7 425.3L499.3 434.7M503.7 425.3L499.7 430.8M504.4 421.9L499.7 430.8M649.1 335.9L653.2 360.2M649.1 335.9L627.1 338.1M649.1 335.9L668.6 350.1M653.2 360.2L655.4 379.7M653.2 360.2L627.1 338.1M653.2 360.2L635.1 363.2M653.2 360.2L668.6 350.1M653.2 360.2L671.6 375.5M655.4 379.7L655.6 406.5M655.4 379.7L635.1 363.2M655.4 379.7L637.6 391.2M655.4 379.7L671.6 375.5M655.4 379.7L674.9 399.6M655.6 406.5L653.6 444M655.6 406.5L637.6 391.2M655.6 406.5L634.6 417.5M655.6 406.5L674.9 399.6M655.6 406.5L671.2 432.7M653.6 444L646.2 468.9M653.6 444L634.6 417.5M653.6 444L633.1 451.1M653.6 444L671.2 432.7M653.6 444L665 458.7M646.2 468.9L636.5 490M646.2 468.9L633.1 451.1M646.2 468.9L628.3 476.7M646.2 468.9L665 458.7M646.2 468.9L658 482.8M636.5 490L631.6 513.8M636.5 490L628.3 476.7M636.5 490L622.5 501.2M636.5 490L658 482.8M636.5 490L648.6 506.4M631.6 513.8L622.5 501.2M631.6 513.8L617 520M631.6 513.8L648.6 506.4M631.6 513.8L643.2 524.9M627.1 338.1L635.1 363.2M627.1 338.1L607.9 349.3M635.1 363.2L637.6 391.2M635.1 363.2L607.9 349.3M635.1 363.2L615.6 373.9M637.6 391.2L634.6 417.5M637.6 391.2L615.6 373.9M637.6 391.2L616.6 400.3M634.6 417.5L633.1 451.1M634.6 417.5L616.6 400.3M634.6 417.5L613.6 431.9M633.1 451.1L628.3 476.7M633.1 451.1L613.6 431.9M633.1 451.1L612.5 462.4M628.3 476.7L622.5 501.2M628.3 476.7L612.5 462.4M628.3 476.7L606.1 489.3M622.5 501.2L617 520M622.5 501.2L606.1 489.3M622.5 501.2L602.4 512.7M617 520L602.4 512.7M617 520L600.2 529.9M607.9 349.3L615.6 373.9M607.9 349.3L583.4 362.7M615.6 373.9L616.6 400.3M615.6 373.9L583.4 362.7M615.6 373.9L588.6 382.3M616.6 400.3L613.6 431.9M616.6 400.3L588.6 382.3M616.6 400.3L587.7 412M613.6 431.9L612.5 462.4M613.6 431.9L587.7 412M613.6 431.9L592 449.4M612.5 462.4L606.1 489.3M612.5 462.4L592 449.4M612.5 462.4L586.5 476.7M606.1 489.3L602.4 512.7M606.1 489.3L586.5 476.7M606.1 489.3L582.4 499.1M602.4 512.7L582.4 499.1M602.4 512.7L600.2 529.9M602.4 512.7L584.8 522.6M583.4 362.7L588.6 382.3M583.4 362.7L556.6 389.3M588.6 382.3L587.7 412M588.6 382.3L556.6 389.3M588.6 382.3L565.2 407.9M587.7 412L592 449.4M587.7 412L565.2 407.9M587.7 412L561.9 431.5M592 449.4L586.5 476.7M592 449.4L561.9 431.5M592 449.4L565.9 461.4M586.5 476.7L582.4 499.1M586.5 476.7L565.9 461.4M586.5 476.7L563.3 487.7M582.4 499.1L563.3 487.7M582.4 499.1L584.8 522.6M582.4 499.1L560.6 513.7M556.6 389.3L565.2 407.9M556.6 389.3L541.3 420.9M565.2 407.9L561.9 431.5M565.2 407.9L541.3 420.9M565.2 407.9L540.1 448.1M561.9 431.5L565.9 461.4M561.9 431.5L540.1 448.1M561.9 431.5L543.8 462.9M565.9 461.4L563.3 487.7M565.9 461.4L543.8 462.9M565.9 461.4L544.3 484.2M563.3 487.7L544.3 484.2M563.3 487.7L560.6 513.7M563.3 487.7L541.3 502.7M541.3 420.9L540.1 448.1M541.3 420.9L533.4 456.4M540.1 448.1L543.8 462.9M540.1 448.1L533.4 456.4M540.1 448.1L535.4 469.2M543.8 462.9L544.3 484.2M543.8 462.9L535.4 469.2M543.8 462.9L536.8 482.7M544.3 484.2L536.8 482.7M544.3 484.2L541.3 502.7M544.3 484.2L535 489.2M533.4 456.4L535.4 469.2M533.4 456.4L526.8 466.8M535.4 469.2L536.8 482.7M535.4 469.2L526.8 466.8M535.4 469.2L528.2 477.2M536.8 482.7L528.2 477.2M536.8 482.7L535 489.2M536.8 482.7L525 485M526.8 466.8L528.2 477.2M526.8 466.8L521.1 473.5M528.2 477.2L521.1 473.5M528.2 477.2L525 485M528.2 477.2L516.1 480.7M521.1 473.5L516.1 480.7M668.6 350.1L686.9 371M668.6 350.1L671.6 375.5M686.9 371L698.7 387.9M686.9 371L671.6 375.5M686.9 371L687 391.6M698.7 387.9L710.1 407.7M698.7 387.9L687 391.6M698.7 387.9L700.9 412.2M710.1 407.7L719.3 429.7M710.1 407.7L700.9 412.2M710.1 407.7L709.2 437.2M719.3 429.7L721.9 452.8M719.3 429.7L709.2 437.2M719.3 429.7L715.4 459.8M721.9 452.8L722.8 472.9M721.9 452.8L715.4 459.8M721.9 452.8L718.9 477.4M722.8 472.9L721.9 487.4M722.8 472.9L718.9 477.4M722.8 472.9L718.6 493.5M721.9 487.4L718.6 493.5M721.9 487.4L717.5 506.2M671.6 375.5L687 391.6M671.6 375.5L674.9 399.6M687 391.6L700.9 412.2M687 391.6L674.9 399.6M687 391.6L686.2 424.8M700.9 412.2L709.2 437.2M700.9 412.2L686.2 424.8M700.9 412.2L697.7 441.7M709.2 437.2L715.4 459.8M709.2 437.2L697.7 441.7M709.2 437.2L704.3 467.4M715.4 459.8L718.9 477.4M715.4 459.8L704.3 467.4M715.4 459.8L709.4 489.5M718.9 477.4L718.6 493.5M718.9 477.4L709.4 489.5M718.9 477.4L710.4 499.9M718.6 493.5L710.4 499.9M718.6 493.5L717.5 506.2M718.6 493.5L712.2 513.8M674.9 399.6L686.2 424.8M674.9 399.6L671.2 432.7M686.2 424.8L697.7 441.7M686.2 424.8L671.2 432.7M686.2 424.8L682.2 450.8M697.7 441.7L704.3 467.4M697.7 441.7L682.2 450.8M697.7 441.7L691.4 471.6M704.3 467.4L709.4 489.5M704.3 467.4L691.4 471.6M704.3 467.4L697.8 486.5M709.4 489.5L710.4 499.9M709.4 489.5L697.8 486.5M709.4 489.5L702.1 507.1M710.4 499.9L702.1 507.1M710.4 499.9L712.2 513.8M710.4 499.9L704.2 521.2M671.2 432.7L682.2 450.8M671.2 432.7L665 458.7M682.2 450.8L691.4 471.6M682.2 450.8L665 458.7M682.2 450.8L673.5 480.8M691.4 471.6L697.8 486.5M691.4 471.6L673.5 480.8M691.4 471.6L682.8 494.9M697.8 486.5L702.1 507.1M697.8 486.5L682.8 494.9M697.8 486.5L690.1 509.7M702.1 507.1L690.1 509.7M702.1 507.1L704.2 521.2M702.1 507.1L692.7 526.3M665 458.7L673.5 480.8M665 458.7L658 482.8M673.5 480.8L682.8 494.9M673.5 480.8L658 482.8M673.5 480.8L665.9 501.7M682.8 494.9L690.1 509.7M682.8 494.9L665.9 501.7M682.8 494.9L673.8 517.8M690.1 509.7L673.8 517.8M690.1 509.7L692.7 526.3M690.1 509.7L678.9 531.8M658 482.8L665.9 501.7M658 482.8L648.6 506.4M665.9 501.7L673.8 517.8M665.9 501.7L648.6 506.4M665.9 501.7L662.2 518.8M673.8 517.8L662.2 518.8M673.8 517.8L678.9 531.8M673.8 517.8L665.6 535.9M648.6 506.4L662.2 518.8M648.6 506.4L643.2 524.9M662.2 518.8L643.2 524.9M662.2 518.8L665.6 535.9M662.2 518.8L647.1 536M643.2 524.9L647.1 536M502.9 465.2L493.4 465.7M502.9 465.2L502.3 459.1M493.4 465.7L482.8 467.7M493.4 465.7L502.3 459.1M493.4 465.7L490.4 460.5M482.8 467.7L472.1 471.5M482.8 467.7L490.4 460.5M482.8 467.7L483 461.6M472.1 471.5L465.1 473.5M472.1 471.5L483 461.6M472.1 471.5L472.3 464.5M465.1 473.5L457.8 479.4M465.1 473.5L472.3 464.5M465.1 473.5L465 468.2M457.8 479.4L450.3 483.7M457.8 479.4L465 468.2M457.8 479.4L459.5 473.1M450.3 483.7L459.5 473.1M502.3 459.1L490.4 460.5M502.3 459.1L501.7 453.1M490.4 460.5L483 461.6M490.4 460.5L501.7 453.1M490.4 460.5L492.8 453M483 461.6L472.3 464.5M483 461.6L492.8 453M483 461.6L481.8 455.3M472.3 464.5L465 468.2M472.3 464.5L481.8 455.3M472.3 464.5L474.2 459.3M465 468.2L459.5 473.1M465 468.2L474.2 459.3M465 468.2L468.3 462.4M459.5 473.1L468.3 462.4M501.7 453.1L492.8 453M501.7 453.1L500.7 447.9M492.8 453L481.8 455.3M492.8 453L500.7 447.9M492.8 453L494 448.5M481.8 455.3L474.2 459.3M481.8 455.3L494 448.5M481.8 455.3L484.2 451.5M474.2 459.3L468.3 462.4M474.2 459.3L484.2 451.5M474.2 459.3L476.5 454.9M468.3 462.4L476.5 454.9M500.7 447.9L494 448.5M500.7 447.9L499.6 440.3M494 448.5L484.2 451.5M494 448.5L499.6 440.3M494 448.5L494.9 445.6M484.2 451.5L476.5 454.9M484.2 451.5L494.9 445.6M484.2 451.5L487.4 447.9M476.5 454.9L487.4 447.9M499.6 440.3L494.9 445.6M499.6 440.3L499.3 434.7M494.9 445.6L487.4 447.9M494.9 445.6L499.3 434.7M494.9 445.6L495.9 441.8M487.4 447.9L495.9 441.8M499.3 434.7L495.9 441.8M499.3 434.7L499.7 430.8M495.9 441.8L499.7 430.8M600.2 529.9L587.8 544.5M600.2 529.9L584.8 522.6M587.8 544.5L567.5 564.5M587.8 544.5L584.8 522.6M587.8 544.5L569.1 535.8M567.5 564.5L547.4 587.1M567.5 564.5L569.1 535.8M567.5 564.5L544.8 557.6M547.4 587.1L526 600.7M547.4 587.1L544.8 557.6M547.4 587.1L518.5 579.2M526 600.7L499.1 618.3M526 600.7L518.5 579.2M526 600.7L492.3 594.6M499.1 618.3L472 629.1M499.1 618.3L492.3 594.6M499.1 618.3L467.5 607.9M472 629.1L467.5 607.9M584.8 522.6L569.1 535.8M584.8 522.6L560.6 513.7M569.1 535.8L544.8 557.6M569.1 535.8L560.6 513.7M569.1 535.8L542.2 537.3M544.8 557.6L518.5 579.2M544.8 557.6L542.2 537.3M544.8 557.6L513.1 550.5M518.5 579.2L492.3 594.6M518.5 579.2L513.1 550.5M518.5 579.2L488.7 570.1M492.3 594.6L467.5 607.9M492.3 594.6L488.7 570.1M492.3 594.6L463.4 580M467.5 607.9L463.4 580M560.6 513.7L542.2 537.3M560.6 513.7L541.3 502.7M542.2 537.3L513.1 550.5M542.2 537.3L541.3 502.7M542.2 537.3L517.8 515.3M513.1 550.5L488.7 570.1M513.1 550.5L517.8 515.3M513.1 550.5L491.2 532.5M488.7 570.1L463.4 580M488.7 570.1L491.2 532.5M488.7 570.1L471.3 544.3M463.4 580L471.3 544.3M541.3 502.7L517.8 515.3M541.3 502.7L535 489.2M517.8 515.3L491.2 532.5M517.8 515.3L535 489.2M517.8 515.3L512.7 497.8M491.2 532.5L471.3 544.3M491.2 532.5L512.7 497.8M491.2 532.5L484.5 513.8M471.3 544.3L484.5 513.8M535 489.2L512.7 497.8M535 489.2L525 485M512.7 497.8L484.5 513.8M512.7 497.8L525 485M512.7 497.8L503.3 493.8M484.5 513.8L503.3 493.8M525 485L503.3 493.8M525 485L516.1 480.7M503.3 493.8L516.1 480.7M717.5 506.2L711.1 527.5M717.5 506.2L712.2 513.8M711.1 527.5L703.8 546.8M711.1 527.5L712.2 513.8M711.1 527.5L705.3 534.5M703.8 546.8L690 571.6M703.8 546.8L705.3 534.5M703.8 546.8L694.7 557M690 571.6L679 590.4M690 571.6L694.7 557M690 571.6L681.2 580.4M679 590.4L663.9 609.9M679 590.4L681.2 580.4M679 590.4L672.3 593.8M663.9 609.9L652.8 620.8M663.9 609.9L672.3 593.8M663.9 609.9L656.4 612.2M652.8 620.8L656.4 612.2M712.2 513.8L705.3 534.5M712.2 513.8L704.2 521.2M705.3 534.5L694.7 557M705.3 534.5L704.2 521.2M705.3 534.5L695.9 540.3M694.7 557L681.2 580.4M694.7 557L695.9 540.3M694.7 557L684.4 563.1M681.2 580.4L672.3 593.8M681.2 580.4L684.4 563.1M681.2 580.4L673.4 581.9M672.3 593.8L656.4 612.2M672.3 593.8L673.4 581.9M672.3 593.8L657.4 603.1M656.4 612.2L657.4 603.1M704.2 521.2L695.9 540.3M704.2 521.2L692.7 526.3M695.9 540.3L684.4 563.1M695.9 540.3L692.7 526.3M695.9 540.3L682.2 547.6M684.4 563.1L673.4 581.9M684.4 563.1L682.2 547.6M684.4 563.1L669.3 571.6M673.4 581.9L657.4 603.1M673.4 581.9L669.3 571.6M673.4 581.9L659.1 587.6M657.4 603.1L659.1 587.6M692.7 526.3L682.2 547.6M692.7 526.3L678.9 531.8M682.2 547.6L669.3 571.6M682.2 547.6L678.9 531.8M682.2 547.6L667 552.2M669.3 571.6L659.1 587.6M669.3 571.6L667 552.2M669.3 571.6L656.5 571.6M659.1 587.6L656.5 571.6M678.9 531.8L667 552.2M678.9 531.8L665.6 535.9M667 552.2L656.5 571.6M667 552.2L665.6 535.9M667 552.2L652.3 553.8M656.5 571.6L652.3 553.8M665.6 535.9L652.3 553.8M665.6 535.9L647.1 536M652.3 553.8L647.1 536.0"/>
</g>
<g>
<line x1="477" y1="440" x2="593" y2="403" stroke="#e8e8e8" stroke-width="11"/>
<rect x="469.5" y="470" width="10" height="75" fill="url(#bnd)"/>
<circle cx="476" cy="439" r="44" fill="url(#sph)"/>
<circle cx="420" cy="396" r="33" fill="url(#sph)"/>
<circle cx="593" cy="403" r="33" fill="url(#sph)"/>
<circle cx="473" cy="569" r="34" fill="url(#sph)"/>
</g>
<g fill="none" stroke-width="1.5">
<path stroke="#320000" d="M391.7 506.3L411 505.9M391.7 506.3L410.7 497.9M391.7 506.3L371.3 508.6M391.7 506.3L398.3 511.7M411 505.9L432.1 502.1M411 505.9L410.7 497.9M411 505.9L430.9 496.3M411 505.9L398.3 511.7M411 505.9L419 508.8M432.1 502.1L448.9 494.5M432.1 502.1L430.9 496.3M432.1 502.1L449 490.2M432.1 502.1L419 508.8M432.1 502.1L438.6 502.6M448.9 494.5L449 490.2M448.9 494.5L438.6 502.6M448.9 494.5L461.8 482.8M448.9 494.5L455.8 491.7M410.7 497.9L430.9 496.3M430.9 496.3L449 490.2M430.9 496.3L447.2 481.8M449 490.2L447.2 481.8M449 490.2L461.8 482.8M449 490.2L464.3 474M447.2 481.8L464.3 474M447.2 481.8L462.7 463.3M313.9 490.5L328.6 497.2M313.9 490.5L331.9 500.6M313.9 490.5L297.3 475.4M328.6 497.2L331.9 500.6M328.6 497.2L344.6 499.6M328.6 497.2L351.2 506.7M331.9 500.6L351.2 506.7M344.6 499.6L351.2 506.7M344.6 499.6L371.3 508.6M351.2 506.7L357.9 509.2M351.2 506.7L371.3 508.6M351.2 506.7L376.5 512.9M371.3 508.6L376.5 512.9M371.3 508.6L398.3 511.7M376.5 512.9L398.3 511.7M376.5 512.9L399.3 513.9M398.3 511.7L399.3 513.9M398.3 511.7L419 508.8M399.3 513.9L419 508.8M419 508.8L423.5 508.5M419 508.8L438.6 502.6M423.5 508.5L438.6 502.6M438.6 502.6L455.8 491.7M297.3 475.4L300 479M461.8 482.8L476.7 465.1M461.8 482.8L464.3 474M461.8 482.8L455.8 491.7M461.8 482.8L471 476.1M476.7 465.1L487.8 448.6M476.7 465.1L464.3 474M476.7 465.1L476.1 456.9M476.7 465.1L483.9 459.5M476.7 465.1L471 476.1M487.8 448.6L497.8 428.4M487.8 448.6L476.1 456.9M487.8 448.6L487.7 436.7M487.8 448.6L496.1 437.2M487.8 448.6L483.9 459.5M497.8 428.4L504.7 407.3M497.8 428.4L487.7 436.7M497.8 428.4L496.7 413.4M497.8 428.4L504.7 417.1M497.8 428.4L496.1 437.2M504.7 407.3L510 389.4M504.7 407.3L496.7 413.4M504.7 407.3L503 395.1M504.7 407.3L510.5 396.8M504.7 407.3L504.7 417.1M510 389.4L513.3 368.2M510 389.4L503 395.1M510 389.4L507.6 376.1M510 389.4L514.5 376.6M510 389.4L510.5 396.8M513.3 368.2L507.6 376.1M513.3 368.2L515.1 361M513.3 368.2L511.1 354.8M513.3 368.2L514.5 376.6M464.3 474L476.1 456.9M464.3 474L462.7 463.3M476.1 456.9L487.7 436.7M476.1 456.9L462.7 463.3M476.1 456.9L473.8 441.6M487.7 436.7L496.7 413.4M487.7 436.7L473.8 441.6M496.7 413.4L503 395.1M503 395.1L507.6 376.1M507.6 376.1L511.1 354.8M455.8 491.7L471 476.1M495.6 280.8L505.9 302.6M495.6 280.8L503.9 301.1M505.9 302.6L503.9 301.1M505.9 302.6L511 319.8M503.9 301.1L511 319.8M503.9 301.1L505.4 318.1M511 319.8L505.4 318.1M511 319.8L515.2 340.7M511 319.8L512.7 339.6M505.4 318.1L512.7 339.6M515.2 340.7L512.7 339.6M515.2 340.7L515.1 361M515.2 340.7L516 363.3M512.7 339.6L515.1 361M512.7 339.6L511.1 354.8M515.1 361L511.1 354.8M515.1 361L516 363.3M515.1 361L514.5 376.6M516 363.3L514.5 376.6M514.5 376.6L513.5 384.5M514.5 376.6L510.5 396.8M513.5 384.5L510.5 396.8M510.5 396.8L504.7 417.1M504.7 417.1L496.1 437.2M504.7 417.1L508.5 404.9M504.7 417.1L500.5 428.3M496.1 437.2L483.9 459.5M496.1 437.2L500.5 428.3M483.9 459.5L471 476.1"/>
<path stroke="#3c0000" d="M346.1 490.8L344.6 499.6M365.4 501.1L391.7 506.3M365.4 501.1L386.6 495.2M365.4 501.1L344.6 499.6M365.4 501.1L371.3 508.6M391.7 506.3L386.6 495.2M386.6 495.2L410.7 497.9M410.7 497.9L403.4 484.9M410.7 497.9L428.2 485.5M430.9 496.3L428.2 485.5M428.2 485.5L447.2 481.8M428.2 485.5L446 467.7M447.2 481.8L446 467.7M446 467.7L462.7 463.3M309.3 483.7L313.9 490.5M309.3 483.7L325.8 489.1M309.3 483.7L328.6 497.2M309.3 483.7L297.3 475.4M325.8 489.1L328.6 497.2M325.8 489.1L344.6 499.6M282.3 453.6L284.4 459.6M297.3 475.4L284.4 459.6M487.7 436.7L486.7 419.4M496.7 413.4L486.7 419.4M496.7 413.4L491.8 400.2M503 395.1L491.8 400.2M503 395.1L499.5 380.8M507.6 376.1L499.5 380.8M507.6 376.1L503.9 357.6M462.7 463.3L473.8 441.6M462.7 463.3L458.6 448.6M473.8 441.6L486.7 419.4M473.8 441.6L458.6 448.6M486.7 419.4L491.8 400.2M491.8 400.2L499.5 380.8M499.5 380.8L503.9 357.6M466.7 247.6L479.4 260.2M479.4 260.2L495.6 280.8M479.4 260.2L490.9 279.3M495.6 280.8L490.9 279.3M490.9 279.3L503.9 301.1M503.9 301.1L495.9 298.4M495.9 298.4L505.4 318.1M505.4 318.1L498.9 317.7M505.4 318.1L505.9 340.5M512.7 339.6L505.9 340.5M505.9 340.5L511.1 354.8M505.9 340.5L503.9 357.6M511.1 354.8L503.9 357.6"/>
<path stroke="#460000" d="M328.2 480.8L346.1 490.8M328.2 480.8L325.8 489.1M346.1 490.8L365.4 501.1M346.1 490.8L361.3 485.5M346.1 490.8L325.8 489.1M365.4 501.1L361.3 485.5M361.3 485.5L386.6 495.2M386.6 495.2L403.4 484.9M403.4 484.9L428.2 485.5M428.2 485.5L424.3 469.6M424.3 469.6L446 467.7M446 467.7L441.3 453.3M446 467.7L458.6 448.6M308.3 475.9L309.3 483.7M308.3 475.9L325.8 489.1M309.3 483.7L294.3 465.4M273.9 432.8L272.9 438.2M266.5 419.8L272.9 438.2M266.5 419.8L267.1 422.3M294.3 465.4L282.3 453.6M294.3 465.4L297.3 475.4M282.3 453.6L272.9 438.2M282.3 453.6L297.3 475.4M473.8 441.6L470.8 427.6M486.7 419.4L470.8 427.6M486.7 419.4L478 405.9M491.8 400.2L478 405.9M491.8 400.2L486 384M499.5 380.8L486 384M499.5 380.8L492.4 362.9M458.6 448.6L470.8 427.6M466.7 247.6L462 245.5M462 245.5L479.4 260.2M479.4 260.2L473.2 259.7M473.2 259.7L490.9 279.3M490.9 279.3L482.4 280.6M490.9 279.3L495.9 298.4M482.4 280.6L495.9 298.4M495.9 298.4L498.9 317.7M498.9 317.7L505.9 340.5M498.9 317.7L496.5 338.6M505.9 340.5L496.5 338.6M496.5 338.6L503.9 357.6M492.4 362.9L503.9 357.6"/>
<path stroke="#500000" d="M328.2 480.8L308.3 475.9M346.1 490.8L341.5 478.9M386.6 495.2L381.5 479.7M381.5 479.7L403.4 484.9M403.4 484.9L424.3 469.6M424.3 469.6L441.3 453.3M441.3 453.3L458.6 448.6M308.3 475.9L294.3 465.4M285.5 446.9L282.3 453.6M273.9 432.8L282.3 453.6M266.5 419.8L261.9 402.2M458.6 448.6L451.7 431.2M470.8 427.6L478 405.9M478 405.9L486 384M486 384L492.4 362.9M462 245.5L473.2 259.7M462 245.5L446.7 238.1M473.2 259.7L482.4 280.6M495.9 298.4L485.6 301.1M485.6 301.1L498.9 317.7M498.9 317.7L487.6 322.2M496.5 338.6L492.4 362.9"/>
<path stroke="#500a0a" d="M312.2 466.4L308.3 475.9M328.2 480.8L341.5 478.9M341.5 478.9L361.3 485.5M361.3 485.5L381.5 479.7M403.4 484.9L404.4 464.7M404.4 464.7L424.3 469.6M424.3 469.6L421 449.3M441.3 453.3L451.7 431.2M308.3 475.9L299.5 461.6M299.5 461.6L294.3 465.4M285.5 446.9L294.3 465.4M273.9 432.8L266.5 419.8M266.5 419.8L262.9 398.8M261.9 402.2L262.9 398.8M470.8 427.6L451.7 431.2M470.8 427.6L463.3 410.2M478 405.9L463.3 410.2M478 405.9L471 390.4M486 384L471 390.4M486 384L479.2 365.6M482.4 280.6L485.6 301.1M485.6 301.1L487.6 322.2M446.7 238.1L414.4 231.6M487.6 322.2L496.5 338.6M483.6 346.8L496.5 338.6M483.6 346.8L492.4 362.9M479.2 365.6L492.4 362.9"/>
<path stroke="#5a0a0a" d="M312.2 466.4L321.3 464.5M312.2 466.4L328.2 480.8M312.2 466.4L299.5 461.6M321.3 464.5L328.2 480.8M321.3 464.5L341.5 478.9M341.5 478.9L358.4 471.3M361.3 485.5L358.4 471.3M358.4 471.3L381.5 479.7M381.5 479.7L376.6 461M381.5 479.7L404.4 464.7M404.4 464.7L421 449.3M421 449.3L441.3 453.3M421 449.3L433.8 434M441.3 453.3L433.8 434M433.8 434L451.7 431.2M299.5 461.6L285.5 446.9M285.5 446.9L273.9 432.8M285.5 446.9L278.7 427.9M273.9 432.8L278.7 427.9M273.9 432.8L268.3 412.1M266.5 419.8L268.3 412.1M268.3 412.1L262.9 398.8M262.9 398.8L263.4 375.2M262.9 398.8L260.6 383.7M263.4 375.2L260.6 383.7M260.6 383.7L263.4 360.9M451.7 431.2L463.3 410.2M451.7 431.2L443.1 413.9M463.3 410.2L471 390.4M471 390.4L479.2 365.6M269.6 340.7L266.2 350.3M462 245.5L453 247.6M462 245.5L438 237.8M453 247.6L473.2 259.7M453 247.6L438 237.8M473.2 259.7L464.6 262.7M464.6 262.7L482.4 280.6M482.4 280.6L473.6 283.7M473.6 283.7L485.6 301.1M485.6 301.1L474.3 299.3M397.3 231.8L414.4 231.6M397.3 231.8L392.5 232.7M446.7 238.1L438 237.8M414.4 231.6L392.5 232.7M414.4 231.6L438 237.8M474.3 299.3L487.6 322.2M473.6 324.6L487.6 322.2M473.6 324.6L483.6 346.8M469.1 352.1L483.6 346.8M469.1 352.1L479.2 365.6M460.9 372.9L479.2 365.6M487.6 322.2L483.6 346.8M483.6 346.8L479.2 365.6"/>
<path stroke="#640a0a" d="M312.2 466.4L306.6 451.2M321.3 464.5L333.5 459.2M321.3 464.5L306.6 451.2M333.5 459.2L341.5 478.9M333.5 459.2L358.4 471.3M359.4 452.5L358.4 471.3M306.6 451.2L299.5 461.6M306.6 451.2L292 442.7M358.4 471.3L376.6 461M376.6 461L404.4 464.7M376.6 461L399.4 447.5M404.4 464.7L399.4 447.5M399.4 447.5L421 449.3M421 449.3L413.9 432.1M413.9 432.1L433.8 434M433.8 434L429.4 413.2M433.8 434L443.1 413.9M429.4 413.2L443.1 413.9M299.5 461.6L292 442.7M285.5 446.9L292 442.7M292 442.7L278.7 427.9M278.7 427.9L268.3 412.1M275.2 406.2L268.3 412.1M268.3 412.1L266.9 390.9M266.9 390.9L262.9 398.8M266.9 390.9L263.4 375.2M263.4 375.2L269.3 350.9M263.4 375.2L263.4 360.9M269.3 350.9L263.4 360.9M269.3 350.9L269.6 340.7M263.4 360.9L269.6 340.7M463.3 410.2L443.1 413.9M463.3 410.2L455.2 392.5M471 390.4L455.2 392.5M471 390.4L460.9 372.9M443.1 413.9L455.2 392.5M455.2 392.5L460.9 372.9M316.8 266.8L325.6 259.4M316.8 266.8L310.7 271.7M325.6 259.4L336.5 252M302.4 280.7L310.7 271.7M302.4 280.7L296.6 287.8M287.6 300.8L296.6 287.8M287.6 300.8L278.1 317M287.6 300.8L283.5 307M275.4 331.8L269.6 340.7M278.1 317L269.6 340.7M453 247.6L443.8 252.6M453 247.6L464.6 262.7M453 247.6L430.9 242.2M443.8 252.6L464.6 262.7M464.6 262.7L453.2 267.8M464.6 262.7L473.6 283.7M453.2 267.8L473.6 283.7M473.6 283.7L455.9 285M473.6 283.7L474.3 299.3M375.7 235.1L360.3 240.1M375.7 235.1L392.5 232.7M375.7 235.1L372.9 237.6M360.3 240.1L372.9 237.6M360.3 240.1L336.5 252M414.4 231.6L412.5 235.7M392.5 232.7L372.9 237.6M392.5 232.7L412.5 235.7M438 237.8L412.5 235.7M438 237.8L430.9 242.2M455.9 285L474.3 299.3M456.7 308.9L474.3 299.3M456.7 308.9L473.6 324.6M455.2 332.2L473.6 324.6M455.2 332.2L469.1 352.1M447.2 356.9L469.1 352.1M447.2 356.9L460.9 372.9M474.3 299.3L473.6 324.6M473.6 324.6L469.1 352.1M469.1 352.1L460.9 372.9"/>
<path stroke="#6e0a0a" d="M321.3 464.5L317.4 446.1M333.5 459.2L359.4 452.5M333.5 459.2L317.4 446.1M333.5 459.2L331.8 438.6M359.4 452.5L372.4 440.1M359.4 452.5L376.6 461M372.4 440.1L376.6 461M372.4 440.1L399.4 447.5M391.4 428.6L399.4 447.5M391.4 428.6L413.9 432.1M410.4 412.6L413.9 432.1M410.4 412.6L429.4 413.2M423.2 399.6L429.4 413.2M306.6 451.2L317.4 446.1M306.6 451.2L302.1 433.8M317.4 446.1L302.1 433.8M405.7 388.6L409.4 371.4M302.1 433.8L292 442.7M302.1 433.8L285.9 416.2M399.4 447.5L413.9 432.1M413.9 432.1L429.4 413.2M429.4 413.2L436.9 398.4M292 442.7L285.9 416.2M285.9 416.2L278.7 427.9M285.9 416.2L275.2 406.2M278.7 427.9L275.2 406.2M275.2 406.2L266.9 390.9M277.2 382L266.9 390.9M266.9 390.9L270.3 363.8M270.3 363.8L263.4 375.2M270.3 363.8L269.3 350.9M276.7 345.3L269.3 350.9M269.3 350.9L275.4 331.8M443.1 413.9L436.9 398.4M455.2 392.5L436.9 398.4M455.2 392.5L442.1 378.2M436.9 398.4L442.1 378.2M423.7 381.8L429.4 361.6M423.7 381.8L409.4 371.4M423.7 381.8L442.1 378.2M429.4 361.6L437.4 337.7M429.4 361.6L409.4 371.4M429.4 361.6L413.7 346.1M429.4 361.6L447.2 356.9M429.4 361.6L442.1 378.2M437.4 337.7L455.2 332.2M437.4 337.7L447.2 356.9M438.8 313.4L456.7 308.9M438.8 313.4L455.2 332.2M409.4 371.4L413.7 346.1M312.3 275.1L316.8 266.8M312.3 275.1L302.4 280.7M316.8 266.8L302.4 280.7M316.8 266.8L336.5 252M316.8 266.8L329 261.9M299.5 290.6L302.4 280.7M299.5 290.6L287.6 300.8M302.4 280.7L287.6 300.8M284.3 313.1L287.6 300.8M284.3 313.1L275.4 331.8M284.3 313.1L278.1 317M275.4 331.8L278.1 317M443.8 252.6L453.2 267.8M443.8 252.6L430.9 242.2M453.2 267.8L455.9 285M360.3 240.1L347.6 248.9M392.5 232.7L390.7 238M372.9 237.6L390.7 238M372.9 237.6L347.6 248.9M412.5 235.7L390.7 238M412.5 235.7L430.9 242.2M412.5 235.7L408 242.6M430.9 242.2L408 242.6M455.9 285L456.7 308.9M456.7 308.9L455.2 332.2M455.2 332.2L447.2 356.9M447.2 356.9L442.1 378.2M442.1 378.2L460.9 372.9M336.5 252L329 261.9M336.5 252L347.6 248.9"/>
<path stroke="#780a0a" d="M359.4 452.5L331.8 438.6M359.4 452.5L352.2 429.7M372.4 440.1L391.4 428.6M372.4 440.1L352.2 429.7M372.4 440.1L366.3 419.2M391.4 428.6L410.4 412.6M410.4 412.6L423.2 399.6M410.4 412.6L405.7 388.6M423.2 399.6L405.7 388.6M423.2 399.6L436.9 398.4M423.2 399.6L423.7 381.8M317.4 446.1L331.8 438.6M317.4 446.1L314.5 426.9M331.8 438.6L352.2 429.7M331.8 438.6L314.5 426.9M405.7 388.6L423.7 381.8M302.1 433.8L314.5 426.9M302.1 433.8L298.3 408M298.3 408L285.9 416.2M285.9 416.2L286.2 395.9M286.2 395.9L275.2 406.2M286.2 395.9L277.2 382M275.2 406.2L277.2 382M277.2 382L280 358.2M277.2 382L270.3 363.8M280 358.2L270.3 363.8M270.3 363.8L276.7 345.3M276.7 345.3L285 326.6M276.7 345.3L275.4 331.8M436.9 398.4L423.7 381.8M437.4 337.7L438.8 313.4M437.4 337.7L413.7 346.1M438.8 313.4L438.4 290.5M438.4 290.5L455.9 285M438.4 290.5L456.7 308.9M438.5 271.9L437.6 261.5M438.5 271.9L453.2 267.8M438.5 271.9L455.9 285M437.6 261.5L443.8 252.6M437.6 261.5L453.2 267.8M437.6 261.5L422.9 250.4M309.4 288.9L312.3 275.1M309.4 288.9L299.5 290.6M312.3 275.1L299.5 290.6M312.3 275.1L329 261.9M312.3 275.1L325.6 273M297.2 307L299.5 290.6M297.2 307L284.3 313.1M299.5 290.6L284.3 313.1M285 326.6L284.3 313.1M285 326.6L275.4 331.8M443.8 252.6L422.9 250.4M372.9 237.6L366 246.4M390.7 238L408 242.6M390.7 238L366 246.4M390.7 238L382.7 249M430.9 242.2L422.9 250.4M408 242.6L422.9 250.4M408 242.6L382.7 249M329 261.9L325.6 273M329 261.9L347.6 248.9M329 261.9L345.8 256.7M347.6 248.9L345.8 256.7M347.6 248.9L366 246.4M345.8 256.7L366 246.4"/>
<path stroke="#820a0a" d="M391.4 428.6L366.3 419.2M391.4 428.6L387.8 404.8M410.4 412.6L387.8 404.8M331.8 438.6L330.1 416M352.2 429.7L366.3 419.2M352.2 429.7L330.1 416M366.3 419.2L387.8 404.8M387.8 404.8L405.7 388.6M314.5 426.9L330.1 416M314.5 426.9L298.3 408M314.5 426.9L312.5 403.8M298.3 408L312.5 403.8M298.3 408L300.1 384.8M298.3 408L286.2 395.9M300.1 384.8L286.2 395.9M286.2 395.9L287.8 374M287.8 374L277.2 382M287.8 374L280 358.2M293.4 353.4L280 358.2M293.4 353.4L287.6 340.2M280 358.2L287.6 340.2M280 358.2L276.7 345.3M287.6 340.2L276.7 345.3M287.6 340.2L296.1 323.1M287.6 340.2L285 326.6M437.4 337.7L417 318.9M438.8 313.4L417 318.9M438.8 313.4L421.3 297M438.4 290.5L438.5 271.9M438.4 290.5L421.3 297M438.4 290.5L419.9 277.1M438.5 271.9L419.9 277.1M438.5 271.9L420.5 263.6M437.6 261.5L420.5 263.6M413.7 346.1L417 318.9M420.5 263.6L422.9 250.4M420.5 263.6L402.7 254.8M309.8 301.2L309.4 288.9M309.8 301.2L297.2 307M309.4 288.9L297.2 307M309.4 288.9L325.6 273M309.4 288.9L322.1 288.1M296.1 323.1L297.2 307M296.1 323.1L285 326.6M297.2 307L285 326.6M408 242.6L402.7 254.8M422.9 250.4L402.7 254.8M325.6 273L322.1 288.1M325.6 273L345.8 256.7M325.6 273L341.7 271.2M345.8 256.7L341.7 271.2M345.8 256.7L361.4 257.2M366 246.4L361.4 257.2M366 246.4L382.7 249M361.4 257.2L382.7 249M382.7 249L378.5 262.5M382.7 249L402.7 254.8"/>
<path stroke="#8c0a0a" d="M352.2 429.7L349.8 402.9M366.3 419.2L349.8 402.9M330.1 416L349.8 402.9M330.1 416L312.5 403.8M330.1 416L330.1 391M312.5 403.8L330.1 391M312.5 403.8L300.1 384.8M312.5 403.8L316.5 378.6M300.1 384.8L316.5 378.6M300.1 384.8L302.5 365.6M300.1 384.8L287.8 374M316.5 378.6L302.5 365.6M302.5 365.6L308.3 346.8M302.5 365.6L287.8 374M302.5 365.6L293.4 353.4M308.3 346.8L312.6 330.9M308.3 346.8L293.4 353.4M308.3 346.8L301.6 333.7M312.6 330.9L301.6 333.7M312.6 330.9L310.5 318M287.8 374L293.4 353.4M293.4 353.4L301.6 333.7M301.6 333.7L287.6 340.2M301.6 333.7L310.5 318M301.6 333.7L296.1 323.1M417 318.9L421.3 297M421.3 297L419.9 277.1M419.9 277.1L420.5 263.6M419.9 277.1L397.3 286.8M419.9 277.1L395.8 270.5M420.5 263.6L395.8 270.5M397.3 286.8L395.8 270.5M395.8 270.5L376.2 280.2M395.8 270.5L378.5 262.5M395.8 270.5L402.7 254.8M376.2 280.2L359.8 272.5M376.2 280.2L378.5 262.5M322.4 321L310.5 318M310.5 318L309.8 301.2M310.5 318L296.1 323.1M310.5 318L321.7 304.3M309.8 301.2L296.1 323.1M309.8 301.2L322.1 288.1M309.8 301.2L321.7 304.3M322.1 288.1L321.7 304.3M322.1 288.1L341.7 271.2M322.1 288.1L338.2 290M321.7 304.3L338.2 290M341.7 271.2L338.2 290M341.7 271.2L361.4 257.2M341.7 271.2L359.8 272.5M338.2 290L359.8 272.5M361.4 257.2L359.8 272.5M361.4 257.2L378.5 262.5M359.8 272.5L378.5 262.5M378.5 262.5L402.7 254.8"/>
<path stroke="#960a0a" d="M349.8 402.9L330.1 391M330.1 391L316.5 378.6M369.2 370.6L372 341.6M316.5 378.6L319.2 354.2M302.5 365.6L319.2 354.2M319.2 354.2L308.3 346.8M319.2 354.2L322 339M308.3 346.8L322 339M322 339L312.6 330.9M322 339L337.8 328.3M322 339L322.4 321M312.6 330.9L322.4 321M421.3 297L397.3 286.8M397.3 286.8L373.2 298.7M397.3 286.8L376.2 280.2M373.2 298.7L376.2 280.2M373.2 298.7L355 290M376.2 280.2L355 290M353.8 316.3L355 290M353.8 316.3L338 306.2M355 290L338 306.2M355 290L338.2 290M355 290L359.8 272.5M337.8 328.3L338 306.2M337.8 328.3L322.4 321M338 306.2L322.4 321M338 306.2L321.7 304.3M338 306.2L338.2 290M322.4 321L321.7 304.3"/>
<path stroke="#8c1414" d="M386.3 380.7L409.4 371.4"/>
<path stroke="#a00a0a" d="M373.2 298.7L353.8 316.3M353.8 316.3L337.8 328.3"/>
<path stroke="#961414" d="M405.7 388.6L386.3 380.7"/>
<path stroke="#a01414" d="M387.8 404.8L386.3 380.7M316.5 378.6L334 366M319.2 354.2L337 348.9M337 348.9L322 339M417 318.9L393.9 306.3M421.3 297L393.9 306.3M393.9 306.3L397.3 286.8M372 341.6L370.3 323.4M372 341.6L353.7 334.8"/>
<path stroke="#aa1414" d="M330.1 391L334 366M334 366L319.2 354.2M337 348.9L337.8 328.3M393.9 306.3L373.2 298.7M370.3 323.4L373.2 298.7M370.3 323.4L353.8 316.3M353.7 334.8L353.8 316.3M353.7 334.8L337.8 328.3"/>
<path stroke="#a01e1e" d="M409.4 371.4L391.2 356.4"/>
<path stroke="#aa1e1e" d="M366.3 419.2L366.2 393M387.8 404.8L366.2 393M386.3 380.7L369.2 370.6M413.7 346.1L391.2 356.4M393.9 306.3L370.3 323.4M370.3 323.4L353.7 334.8"/>
<path stroke="#b41e1e" d="M349.8 402.9L366.2 393M366.2 393L369.2 370.6M334 366L337 348.9M337 348.9L353.7 334.8"/>
<path stroke="#be2828" d="M349.8 402.9L353.5 377.2M366.2 393L386.3 380.7M330.1 391L353.5 377.2M353.5 377.2L369.2 370.6M369.2 370.6L391.2 356.4M351.4 359.2L372 341.6M391.2 356.4L372 341.6"/>
<path stroke="#c82828" d="M353.5 377.2L334 366M369.2 370.6L351.4 359.2"/>
<path stroke="#c83232" d="M386.3 380.7L391.2 356.4M351.4 359.2L353.7 334.8M413.7 346.1L394.5 330.4"/>
<path stroke="#d23232" d="M334 366L351.4 359.2M351.4 359.2L337 348.9M417 318.9L394.5 330.4"/>
<path stroke="#dc3232" d="M366.2 393L353.5 377.2M394.5 330.4L372 341.6"/>
<path stroke="#e63c3c" d="M353.5 377.2L351.4 359.2M394.5 330.4L393.9 306.3M394.5 330.4L370.3 323.4"/>
<path stroke="#fa5050" d="M391.2 356.4L394.5 330.4"/>
<path stroke="#0a320a" d="M523.1 686.3L548.4 685.2M523.1 686.3L517.8 694.3M548.4 685.2L569.9 679M548.4 685.2L568.1 673.3M548.4 685.2L517.8 694.3M548.4 685.2L546.5 691.9M569.9 679L590 671.7M569.9 679L568.1 673.3M569.9 679L586.7 668.8M569.9 679L546.5 691.9M569.9 679L572.1 683.2M590 671.7L606.2 662.9M590 671.7L586.7 668.8M590 671.7L609.2 656.8M590 671.7L572.1 683.2M590 671.7L591.3 673.3M606.2 662.9L620.9 653.6M606.2 662.9L609.2 656.8M606.2 662.9L624.8 648.4M606.2 662.9L591.3 673.3M606.2 662.9L609.8 661.4M620.9 653.6L636.2 640.5M620.9 653.6L624.8 648.4M620.9 653.6L636.7 639.4M636.2 640.5L636.7 639.4M568.1 673.3L586.7 668.8M568.1 673.3L585.8 658.2M586.7 668.8L609.2 656.8M586.7 668.8L585.8 658.2M586.7 668.8L607.4 651.2M609.2 656.8L624.8 648.4M609.2 656.8L607.4 651.2M609.2 656.8L624.1 643.7M624.8 648.4L636.7 639.4M624.8 648.4L624.1 643.7M624.8 648.4L640.4 631.8M636.7 639.4L640.4 631.8M636.7 639.4L647.1 628.9M636.7 639.4L649.1 626M585.8 658.2L607.4 651.2M607.4 651.2L624.1 643.7M607.4 651.2L607.5 640M607.4 651.2L626.3 632.4M624.1 643.7L640.4 631.8M624.1 643.7L626.3 632.4M624.1 643.7L643.2 621.6M640.4 631.8L643.2 621.6M640.4 631.8L649.1 626M640.4 631.8L653.1 618.4M626.3 632.4L643.2 621.6M626.3 632.4L640.9 612.5M643.2 621.6L640.9 612.5M643.2 621.6L653.1 618.4M643.2 621.6L655.8 607.4M640.9 612.5L655.8 607.4M442.6 686.5L445.3 689.6M442.6 686.5L469.7 690.8M442.6 686.5L467.1 694.9M442.6 686.5L420 675.4M445.3 689.6L467.1 694.9M445.3 689.6L420 675.4M469.7 690.8L467.1 694.9M469.7 690.8L493.3 690.9M469.7 690.8L498.1 697.8M467.1 694.9L462.8 694.5M467.1 694.9L498.1 697.8M467.1 694.9L494.5 699.9M493.3 690.9L498.1 697.8M493.3 690.9L517.8 694.3M498.1 697.8L494.5 699.9M498.1 697.8L517.8 694.3M498.1 697.8L521.6 698.2M494.5 699.9L521.6 698.2M517.8 694.3L521.6 698.2M517.8 694.3L546.5 691.9M521.6 698.2L521.7 698.9M521.6 698.2L546.5 691.9M521.6 698.2L547.8 694.1M546.5 691.9L547.8 694.1M546.5 691.9L572.1 683.2M547.8 694.1L572.1 683.2M572.1 683.2L572 684.1M572.1 683.2L591.3 673.3M420 675.4L398.7 658.7M420 675.4L422 677.2M647.1 628.9L649.1 626M662.6 613.5L649.1 626M662.6 613.5L666.5 608.3M673.5 600.3L666.5 608.3M673.5 600.3L678.6 591.3M686.4 579.9L678.6 591.3M686.4 579.9L688.5 574.9M696.9 562L707.7 539.1M696.9 562L688.5 574.9M696.9 562L699.8 554M707.7 539.1L713.6 520.6M707.7 539.1L699.8 554M707.7 539.1L709.8 527.9M713.6 520.6L719.3 501.5M713.6 520.6L709.8 527.9M713.6 520.6L715.2 509.9M719.3 501.5L722.8 485.6M719.3 501.5L715.2 509.9M719.3 501.5L720.6 491.4M722.8 485.6L720.6 491.4M722.8 485.6L725.4 462.7M722.8 485.6L724.2 470.1M649.1 626L666.5 608.3M649.1 626L653.1 618.4M666.5 608.3L678.6 591.3M666.5 608.3L653.1 618.4M666.5 608.3L667.8 601.5M678.6 591.3L688.5 574.9M678.6 591.3L667.8 601.5M678.6 591.3L680.9 581M688.5 574.9L699.8 554M688.5 574.9L680.9 581M688.5 574.9L692.7 559.6M699.8 554L709.8 527.9M699.8 554L692.7 559.6M699.8 554L702.5 537.7M709.8 527.9L715.2 509.9M709.8 527.9L702.5 537.7M709.8 527.9L708.5 517.8M715.2 509.9L720.6 491.4M715.2 509.9L708.5 517.8M715.2 509.9L716 497.2M720.6 491.4L716 497.2M720.6 491.4L724.2 470.1M720.6 491.4L721.4 475.7M653.1 618.4L667.8 601.5M653.1 618.4L655.8 607.4M667.8 601.5L680.9 581M667.8 601.5L655.8 607.4M667.8 601.5L667.6 589.7M680.9 581L692.7 559.6M680.9 581L667.6 589.7M680.9 581L680.1 569.5M692.7 559.6L702.5 537.7M692.7 559.6L680.1 569.5M692.7 559.6L693.2 547M702.5 537.7L708.5 517.8M702.5 537.7L693.2 547M702.5 537.7L699.5 528.5M708.5 517.8L716 497.2M708.5 517.8L699.5 528.5M708.5 517.8L706.5 507.9M716 497.2L706.5 507.9M716 497.2L715.1 481.4M716 497.2L721.4 475.7M655.8 607.4L667.6 589.7M655.8 607.4L655 595.8M667.6 589.7L680.1 569.5M667.6 589.7L655 595.8M667.6 589.7L665.7 579.1M680.1 569.5L693.2 547M680.1 569.5L665.7 579.1M680.1 569.5L677.9 555.1M693.2 547L699.5 528.5M699.5 528.5L706.5 507.9M706.5 507.9L715.1 481.4M675.6 313.8L693.8 335.3M693.8 335.3L704.9 353.6M704.9 353.6L716.5 380.5M704.9 353.6L716.4 384.5M716.5 380.5L716.4 384.5M716.5 380.5L723.4 408.7M716.4 384.5L723.4 408.7M716.4 384.5L719.3 407.4M723.4 408.7L719.3 407.4M723.4 408.7L725.7 429.4M723.4 408.7L724.7 434.1M719.3 407.4L724.7 434.1M719.3 407.4L720.3 432.1M725.7 429.4L724.7 434.1M725.7 429.4L725.4 448.3M724.7 434.1L720.3 432.1M724.7 434.1L725.4 448.3M724.7 434.1L722.7 450.5M720.3 432.1L722.7 450.5M720.3 432.1L717.8 459.7M725.4 448.3L722.7 450.5M725.4 448.3L725.4 462.7M725.4 448.3L724.2 470.1M722.7 450.5L724.2 470.1M722.7 450.5L717.8 459.7M722.7 450.5L721.4 475.7M725.4 462.7L724.2 470.1M724.2 470.1L721.4 475.7M717.8 459.7L715.1 481.4M717.8 459.7L721.4 475.7M715.1 481.4L721.4 475.7"/>
<path stroke="#0a3c0a" d="M495.7 681.8L493.3 690.9M523.1 686.3L543.7 675.9M523.1 686.3L493.3 690.9M548.4 685.2L543.7 675.9M543.7 675.9L568.1 673.3M568.1 673.3L563.9 662.2M563.9 662.2L585.8 658.2M585.8 658.2L588.5 642.1M585.8 658.2L607.5 640M607.5 640L626.3 632.4M607.5 640L625.4 618.2M626.3 632.4L625.4 618.2M625.4 618.2L640.9 612.5M640.9 612.5L638.2 599.8M640.9 612.5L655 595.8M638.2 599.8L655 595.8M445.4 682.2L442.6 686.5M445.4 682.2L469.7 690.8M442.6 686.5L420.7 670.4M472.9 682.1L469.7 690.8M472.9 682.1L493.3 690.9M420.7 670.4L420 675.4M401.4 657.5L420 675.4M401.4 657.5L398.7 658.7M386.3 638.9L398.7 658.7M386.3 638.9L384.4 636M693.2 547L677.9 555.1M693.2 547L687 534.8M699.5 528.5L687 534.8M699.5 528.5L696.7 513.9M706.5 507.9L696.7 513.9M706.5 507.9L703.2 492.8M655 595.8L665.7 579.1M655 595.8L648.7 584.2M665.7 579.1L677.9 555.1M677.9 555.1L687 534.8M687 534.8L696.7 513.9M696.7 513.9L703.2 492.8M652 297.3L675.6 313.8M675.6 313.8L691.3 335.1M693.8 335.3L691.3 335.1M691.3 335.1L704.9 353.6M691.3 335.1L701.9 356.1M704.9 353.6L701.9 356.1M701.9 356.1L716.4 384.5M701.9 356.1L710.3 384.5M716.4 384.5L710.3 384.5M710.3 384.5L719.3 407.4M719.3 407.4L713.9 413.7M713.9 413.7L720.3 432.1M720.3 432.1L714 437.4M714 437.4L717.8 459.7M709.6 464.5L717.8 459.7M709.6 464.5L715.1 481.4M703.2 492.8L715.1 481.4"/>
<path stroke="#0a460a" d="M495.7 681.8L523.1 686.3M495.7 681.8L515.9 674.7M495.7 681.8L472.9 682.1M523.1 686.3L515.9 674.7M515.9 674.7L543.7 675.9M543.7 675.9L541.1 662.9M543.7 675.9L563.9 662.2M541.1 662.9L563.9 662.2M563.9 662.2L564.5 644.4M563.9 662.2L588.5 642.1M588.5 642.1L607.5 640M588.5 642.1L605.4 622.9M607.5 640L605.4 622.9M605.4 622.9L625.4 618.2M625.4 618.2L622.4 605.3M625.4 618.2L638.2 599.8M622.4 605.3L638.2 599.8M638.2 599.8L635.7 587.6M638.2 599.8L648.7 584.2M448.6 674.3L445.4 682.2M448.6 674.3L472.9 682.1M445.4 682.2L472.9 682.1M445.4 682.2L429.1 667.4M445.4 682.2L420.7 670.4M429.1 667.4L420.7 670.4M420.7 670.4L401.4 657.5M401.4 657.5L386.3 638.9M386.3 638.9L375.3 611.4M665.7 579.1L648.7 584.2M665.7 579.1L661.2 562.7M677.9 555.1L661.2 562.7M677.9 555.1L674.3 541.5M687 534.8L674.3 541.5M687 534.8L682.8 520.6M696.7 513.9L682.8 520.6M696.7 513.9L691.9 501M648.7 584.2L661.2 562.7M661.2 562.7L674.3 541.5M652 297.3L651.9 299.1M652 297.3L626.5 289.5M651.9 299.1L675.6 313.8M675.6 313.8L673.2 315.6M673.2 315.6L691.3 335.1M691.3 335.1L687.5 339.3M687.5 339.3L701.9 356.1M701.9 356.1L698.8 367.9M698.8 367.9L710.3 384.5M710.3 384.5L704.8 394.6M710.3 384.5L713.9 413.7M704.8 394.6L713.9 413.7M713.9 413.7L706.1 418.7M713.9 413.7L714 437.4M706.1 418.7L714 437.4M703.4 448L714 437.4M703.4 448L709.6 464.5M697.6 473.3L709.6 464.5M697.6 473.3L703.2 492.8M691.9 501L703.2 492.8M714 437.4L709.6 464.5M709.6 464.5L703.2 492.8"/>
<path stroke="#0a500a" d="M476.7 673.4L495.7 681.8M476.7 673.4L492 669.8M476.7 673.4L448.6 674.3M476.7 673.4L472.9 682.1M495.7 681.8L492 669.8M492 669.8L515.9 674.7M515.9 674.7L515.9 661.4M515.9 674.7L541.1 662.9M515.9 661.4L541.1 662.9M541.1 662.9L564.5 644.4M564.5 644.4L588.5 642.1M564.5 644.4L588.3 624.2M588.5 642.1L588.3 624.2M588.3 624.2L605.4 622.9M605.4 622.9L605.4 605.7M605.4 622.9L622.4 605.3M605.4 605.7L622.4 605.3M622.4 605.3L616.2 588.8M622.4 605.3L635.7 587.6M616.2 588.8L635.7 587.6M635.7 587.6L648.7 584.2M635.7 587.6L646.6 564.1M448.6 674.3L429.1 667.4M429.1 667.4L405.9 651.2M405.9 651.2L420.7 670.4M405.9 651.2L401.4 657.5M389.7 635.1L401.4 657.5M389.7 635.1L386.3 638.9M376.2 604.9L386.3 638.9M376.2 604.9L375.3 611.4M375.6 579.7L375.3 611.4M375.6 579.7L375.6 578.7M648.7 584.2L646.6 564.1M661.2 562.7L646.6 564.1M661.2 562.7L654.9 547.6M674.3 541.5L682.8 520.6M674.3 541.5L654.9 547.6M674.3 541.5L667.7 526.6M682.8 520.6L667.7 526.6M682.8 520.6L675 507.5M682.8 520.6L691.9 501M646.6 564.1L654.9 547.6M654.9 547.6L667.7 526.6M651.9 299.1L673.2 315.6M651.9 299.1L626.5 289.5M673.2 315.6L687.5 339.3M687.5 339.3L698.8 367.9M698.8 367.9L704.8 394.6M704.8 394.6L706.1 418.7M598.3 290.8L626.5 289.5M692.3 426L706.1 418.7M692.3 426L703.4 448M687 454.8L703.4 448M687 454.8L697.6 473.3M682.3 482.7L697.6 473.3M682.3 482.7L691.9 501M675 507.5L691.9 501M706.1 418.7L703.4 448M703.4 448L697.6 473.3M697.6 473.3L691.9 501.0"/>
<path stroke="#0a5a0a" d="M456.8 663.9L470.7 660.7M456.8 663.9L476.7 673.4M456.8 663.9L448.6 674.3M456.8 663.9L432.6 656.8M470.7 660.7L476.7 673.4M470.7 660.7L492 669.8M487.9 654.5L492 669.8M487.9 654.5L515.9 661.4M522.3 643L515.9 661.4M492 669.8L515.9 661.4M515.9 661.4L541.4 646.5M541.1 662.9L541.4 646.5M541.4 646.5L564.5 644.4M541.4 646.5L563.2 629.9M564.5 644.4L563.2 629.9M563.2 629.9L588.3 624.2M563.2 629.9L583.5 605.8M588.3 624.2L583.5 605.8M588.3 624.2L605.4 605.7M583.5 605.8L605.4 605.7M605.4 605.7L596.4 588.5M605.4 605.7L616.2 588.8M596.4 588.5L616.2 588.8M616.2 588.8L612.4 573.5M616.2 588.8L632.5 569.4M635.7 587.6L632.5 569.4M612.4 573.5L632.5 569.4M632.5 569.4L626.4 552.7M632.5 569.4L646.6 564.1M632.5 569.4L641.6 549.9M448.6 674.3L432.6 656.8M432.6 656.8L429.1 667.4M410.2 646.5L429.1 667.4M410.2 646.5L405.9 651.2M393.3 625.7L405.9 651.2M393.3 625.7L389.7 635.1M381.9 604.7L389.7 635.1M383.3 555.3L375.6 579.7M383.3 555.3L383.1 552.6M399.8 528.8L411.2 514.9M399.8 528.8L383.1 552.6M399.8 528.8L397.2 531.4M411.2 514.9L428.8 497.6M424.5 501L428.8 497.6M405.9 651.2L389.7 635.1M389.7 635.1L376.2 604.9M376.2 604.9L375.6 579.7M375.6 579.7L383.1 552.6M428.8 497.6L441.8 487.9M646.6 564.1L641.6 549.9M654.9 547.6L641.6 549.9M654.9 547.6L650.6 532.7M667.7 526.6L650.6 532.7M667.7 526.6L656.3 514.6M667.7 526.6L675 507.5M641.6 549.9L650.6 532.7M650.6 532.7L656.3 514.6M503.6 424.2L500.9 427.7M505.9 419.3L500.9 427.7M505.9 419.3L511.5 411.8M505.9 419.3L511.6 412.4M500.6 429.8L500.9 427.7M500.6 429.8L497 436.8M500.9 427.7L497 436.8M496 441.8L497 436.8M497 436.8L491.2 445.6M491.2 445.6L481.3 451M467.1 463.6L462.8 467.8M458.3 474.7L462.8 467.8M458.3 474.7L455.8 477.8M448.9 484.1L455.8 477.8M448.9 484.1L441.8 487.9M651.9 299.1L648.7 304.2M651.9 299.1L626.6 293M648.7 304.2L673.2 315.6M673.2 315.6L669.4 322.8M669.4 322.8L687.5 339.3M669.4 322.8L680 347.3M687.5 339.3L680 347.3M680 347.3L698.8 367.9M680 347.3L690.2 375.7M698.8 367.9L690.2 375.7M690.2 375.7L704.8 394.6M690.2 375.7L692.3 398.4M704.8 394.6L692.3 398.4M511.5 411.8L515.9 404.5M511.5 411.8L511.6 412.4M523.1 377.5L515.9 404.5M523.1 377.5L531.4 357.4M523.1 377.5L521.1 384.7M515.9 404.5L511.6 412.4M515.9 404.5L521.1 384.7M515.9 404.5L517.2 403M511.6 412.4L517.2 403M551.8 321.1L531.4 357.4M551.8 321.1L572.3 302.3M551.8 321.1L548.2 327M531.4 357.4L521.1 384.7M531.4 357.4L548.2 327M531.4 357.4L530.3 363.3M521.1 384.7L517.2 403M521.1 384.7L530.3 363.3M521.1 384.7L522.5 385.2M517.2 403L522.5 385.2M598.3 290.8L572.3 302.3M598.3 290.8L605.2 290.6M626.5 289.5L605.2 290.6M626.5 289.5L626.6 293M677.5 439.5L687 454.8M672.4 466.3L687 454.8M672.4 466.3L682.3 482.7M663.9 492.3L682.3 482.7M663.9 492.3L675 507.5M656.3 514.6L675 507.5M692.3 398.4L692.3 426M692.3 398.4L706.1 418.7M692.3 426L687 454.8M687 454.8L682.3 482.7M682.3 482.7L675 507.5"/>
<path stroke="#0a640a" d="M456.8 663.9L445.4 649M470.7 660.7L487.9 654.5M470.7 660.7L445.4 649M470.7 660.7L466.7 645.4M487.9 654.5L522.3 643M487.9 654.5L466.7 645.4M487.9 654.5L481 638.5M522.3 643L537.8 628.7M522.3 643L541.4 646.5M537.8 628.7L560 609.8M537.8 628.7L541.4 646.5M537.8 628.7L563.2 629.9M560 609.8L563.2 629.9M560 609.8L583.5 605.8M581 587L583.5 605.8M581 587L596.4 588.5M597.2 570.1L596.4 588.5M597.2 570.1L612.4 573.5M606.8 554.3L612.4 573.5M606.8 554.3L626.4 552.7M618.7 540.8L626.4 552.7M445.4 649L432.6 656.8M583.5 605.8L596.4 588.5M596.4 588.5L612.4 573.5M612.4 573.5L626.4 552.7M626.4 552.7L641.6 549.9M626.4 552.7L633.9 539.4M432.6 656.8L410.2 646.5M432.6 656.8L426.1 640.5M410.2 646.5L393.3 625.7M410.2 646.5L426.1 640.5M393.3 625.7L381.9 604.7M381.9 604.7L376.2 604.9M379.3 578.9L383.3 555.3M379.3 578.9L376.2 604.9M379.3 578.9L375.6 579.7M383.3 555.3L399.8 528.8M383.3 555.3L404.5 525.2M399.8 528.8L404.5 525.2M399.8 528.8L416.8 509.5M411.2 514.9L416.8 509.5M404.5 525.2L416.8 509.5M427.2 501.8L416.8 509.5M427.2 501.8L436.9 492.6M416.8 509.5L436.9 492.6M416.8 509.5L428.8 497.6M436.9 492.6L428.8 497.6M436.9 492.6L453.8 482M436.9 492.6L448.9 484.1M428.8 497.6L448.9 484.1M641.6 549.9L633.9 539.4M650.6 532.7L633.9 539.4M650.6 532.7L640.3 521.3M633.9 539.4L640.3 521.3M502.6 429.3L503.6 424.2M502.6 429.3L500.6 429.8M503.6 424.2L505.9 419.3M503.6 424.2L500.6 429.8M503.6 424.2L511.6 412.4M503.6 424.2L509.6 417.1M498.5 437.9L500.6 429.8M500.6 429.8L496 441.8M496 441.8L485.9 448.8M496 441.8L491.2 445.6M485.9 448.8L491.2 445.6M485.9 448.8L477 454.5M485.9 448.8L481.3 451M477 454.5L481.3 451M477 454.5L467.1 463.6M477 454.5L472.5 457.6M462.5 471.4L458.3 474.7M467.1 463.6L472.5 457.6M467.1 463.6L458.3 474.7M453.8 482L458.3 474.7M453.8 482L448.9 484.1M458.3 474.7L448.9 484.1M648.7 304.2L669.4 322.8M648.7 304.2L626.6 293M669.4 322.8L663.2 331.6M663.2 331.6L680 347.3M680 347.3L674.9 356.9M674.9 356.9L690.2 375.7M690.2 375.7L678 386M511.6 412.4L509.6 417.1M517.2 403L509.6 417.1M517.2 403L516.5 410.3M572.3 302.3L548.2 327M572.3 302.3L605.2 290.6M548.2 327L530.3 363.3M530.3 363.3L522.5 385.2M530.3 363.3L548 331.7M530.3 363.3L531.7 365M522.5 385.2L531.7 365M522.5 385.2L516.5 410.3M522.5 385.2L521.9 393.5M531.7 365L521.9 393.5M653.8 476.6L663.9 492.3M646.9 498.1L663.9 492.3M646.9 498.1L656.3 514.6M640.3 521.3L656.3 514.6M678 386L692.3 398.4M679.3 410.4L677.5 439.5M679.3 410.4L692.3 398.4M679.3 410.4L692.3 426M677.5 439.5L672.4 466.3M677.5 439.5L692.3 426M672.4 466.3L663.9 492.3M663.9 492.3L656.3 514.6M509.6 417.1L516.5 410.3M516.5 410.3L521.9 393.5M516 418.8L521.9 393.5M521.9 393.5L523.2 403.6"/>
<path stroke="#146414" d="M522.3 643L481 638.5M522.3 643L507.8 624M537.8 628.7L507.8 624M560 609.8L581 587M581 587L597.2 570.1M597.2 570.1L606.8 554.3M606.8 554.3L618.7 540.8M618.7 540.8L633.9 539.4M445.4 649L466.7 645.4M445.4 649L426.1 640.5M410.2 646.5L405.6 622M381.9 604.7L379.3 578.9M383.3 555.3L391.4 546.6M404.5 525.2L427.2 501.8M443 490.8L436.9 492.6M443 490.8L453.8 482M633.9 539.4L622.2 523.3M622.2 523.3L640.3 521.3M538.4 467.4L536 452.5M502.6 429.3L498.5 437.9M502.6 429.3L509.6 417.1M498.5 437.9L496 441.8M483.7 451.7L485.9 448.8M483.7 451.7L477 454.5M472 460.5L477 454.5M472 460.5L467.1 463.6M462.5 471.4L467.1 463.6M462.5 471.4L453.8 482M648.7 304.2L645.9 311.9M645.9 311.9L669.4 322.8M663.2 331.6L674.9 356.9M674.9 356.9L678 386M572.3 302.3L570.4 306.7M548.2 327L570.4 306.7M548.2 327L548 331.7M605.2 290.6L626.6 293M660.6 448.2L677.5 439.5M660.6 448.2L672.4 466.3M653.8 476.6L672.4 466.3M646.9 498.1L640.3 521.3M678 386L679.3 410.4M516.5 410.3L516 418.8M516 418.8L523.2 403.6M521.9 393.5L532.3 375.7"/>
<path stroke="#146e14" d="M537.8 628.7L535.2 605.9M560 609.8L535.2 605.9M560 609.8L559 587.8M581 587L559 587.8M581 587L578.2 567.1M597.2 570.1L578.2 567.1M597.2 570.1L591.1 548.8M606.8 554.3L591.1 548.8M606.8 554.3L605.7 533.5M618.7 540.8L605.7 533.5M618.7 540.8L622.2 523.3M445.4 649L436.6 630.1M466.7 645.4L481 638.5M466.7 645.4L436.6 630.1M466.7 645.4L455.2 625.1M481 638.5L507.8 624M481 638.5L455.2 625.1M481 638.5L481.9 613.2M507.8 624L535.2 605.9M507.8 624L481.9 613.2M507.8 624L508.6 604.4M535.2 605.9L559 587.8M535.2 605.9L508.6 604.4M535.2 605.9L532.7 583.9M559 587.8L578.2 567.1M559 587.8L532.7 583.9M559 587.8L560.4 557.6M578.2 567.1L591.1 548.8M578.2 567.1L560.4 557.6M578.2 567.1L574 544M591.1 548.8L605.7 533.5M591.1 548.8L574 544M591.1 548.8L589.2 523.6M605.7 533.5L589.2 523.6M605.7 533.5L622.2 523.3M605.7 533.5L609.1 516.7M436.6 630.1L455.2 625.1M436.6 630.1L426.1 640.5M436.6 630.1L419.3 615.4M455.2 625.1L481.9 613.2M528.7 487.9L519.3 483.5M393.3 625.7L405.6 622M393.3 625.7L393.1 601M381.9 604.7L393.1 601M381.9 604.7L385.8 577.4M379.3 578.9L385.8 577.4M379.3 578.9L391.4 546.6M426.1 640.5L419.3 615.4M426.1 640.5L405.6 622M419.3 615.4L405.6 622M405.6 622L393.1 601M393.1 601L385.8 577.4M385.8 577.4L391.4 546.6M397.2 547.1L391.4 546.6M397.2 547.1L413.5 519.8M424.9 515.2L413.5 519.8M424.9 515.2L434 500.1M447.7 494.8L434 500.1M447.7 494.8L455.4 486.7M467.6 483L455.4 486.7M391.4 546.6L413.5 519.8M391.4 546.6L404.5 525.2M413.5 519.8L434 500.1M413.5 519.8L404.5 525.2M413.5 519.8L427.2 501.8M434 500.1L455.4 486.7M434 500.1L427.2 501.8M434 500.1L443 490.8M455.4 486.7L443 490.8M455.4 486.7L460.6 478.9M427.2 501.8L443 490.8M443 490.8L460.6 478.9M622.2 523.3L627.1 506.4M622.2 523.3L609.1 516.7M627.1 506.4L634.5 487.7M627.1 506.4L609.1 516.7M627.1 506.4L611.3 496.8M627.1 506.4L646.9 498.1M627.1 506.4L640.3 521.3M634.5 487.7L640.5 460.7M634.5 487.7L611.3 496.8M634.5 487.7L653.8 476.6M634.5 487.7L646.9 498.1M640.5 460.7L660.6 448.2M640.5 460.7L653.8 476.6M644.2 427.2L663.5 419.5M644.2 427.2L660.6 448.2M646.7 397.8L661 387.5M646.7 397.8L663.5 419.5M552.6 455.4L538.4 467.4M540.9 483.9L538.4 467.4M538.4 467.4L530.1 468.3M536 452.5L534.6 431.9M536 452.5L530.1 468.3M536 452.5L528.9 457.2M534.6 431.9L528.9 457.2M534.6 431.9L526.6 443.1M534.6 431.9L533.8 418.4M530.1 468.3L528.9 457.2M528.9 457.2L521 456.2M528.9 457.2L526.6 443.1M503.9 441.2L503.6 432.9M503.6 432.9L502.6 429.3M503.6 432.9L498.8 445.1M503.6 432.9L498.5 437.9M503.6 432.9L508.6 422.3M503.6 432.9L507.3 431.4M502.6 429.3L508.6 422.3M498.8 445.1L498.5 437.9M498.8 445.1L493.2 446.9M498.5 437.9L493.2 446.9M490.1 450.9L493.2 446.9M490.1 450.9L483.7 451.7M493.2 446.9L496 441.8M493.2 446.9L483.7 451.7M493.2 446.9L485.9 448.8M480 457.9L483.7 451.7M480 457.9L472 460.5M483.7 451.7L472 460.5M468.7 475.1L460.6 478.9M469.8 467.2L472 460.5M469.8 467.2L460.6 478.9M469.8 467.2L462.5 471.4M472 460.5L462.5 471.4M460.6 478.9L462.5 471.4M460.6 478.9L453.8 482M648.7 304.2L627.2 301.9M645.9 311.9L638.9 323.8M645.9 311.9L663.2 331.6M645.9 311.9L627.2 301.9M638.9 323.8L663.2 331.6M663.2 331.6L654.7 340.3M654.7 340.3L674.9 356.9M654.7 340.3L660.9 363.8M674.9 356.9L660.9 363.8M605.2 290.6L570.4 306.7M605.2 290.6L598.7 297.9M570.4 306.7L548 331.7M570.4 306.7L598.7 297.9M570.4 306.7L572 312.4M548 331.7L531.7 365M548 331.7L572 312.4M548 331.7L548.5 339.7M531.7 365L548.5 339.7M531.7 365L532.3 375.7M626.6 293L598.7 297.9M626.6 293L627.2 301.9M598.7 297.9L627.2 301.9M548.5 339.7L532.3 375.7M660.9 363.8L661 387.5M660.9 363.8L678 386M661 387.5L663.5 419.5M661 387.5L678 386M661 387.5L679.3 410.4M663.5 419.5L660.6 448.2M663.5 419.5L679.3 410.4M663.5 419.5L677.5 439.5M660.6 448.2L653.8 476.6M653.8 476.6L646.9 498.1M509.6 417.1L508.6 422.3M508.6 422.3L507.3 431.4M508.6 422.3L516.5 410.3M508.6 422.3L516 418.8M507.3 431.4L516 418.8M516 418.8L516 425.8M516 425.8L523.2 403.6M516 425.8L523.5 418.9M516 436.6L523.5 418.9M516 436.6L525.9 429.9M517.7 445.5L525.9 429.9M517.7 445.5L526.6 443.1M521 456.2L526.6 443.1M523.2 403.6L523.5 418.9M523.2 403.6L532.3 375.7M523.2 403.6L531.1 390.2M523.5 418.9L525.9 429.9M523.5 418.9L531.1 390.2M523.5 418.9L533.2 400.4M525.9 429.9L526.6 443.1M525.9 429.9L533.2 400.4M525.9 429.9L533.8 418.4M526.6 443.1L533.8 418.4M532.3 375.7L531.1 390.2M532.3 375.7L546.9 350.7M531.1 390.2L533.2 400.4M533.2 400.4L533.8 418.4"/>
<path stroke="#147814" d="M436.6 630.1L437.1 608.6M455.2 625.1L437.1 608.6M455.2 625.1L454.2 599.1M481.9 613.2L508.6 604.4M481.9 613.2L454.2 599.1M481.9 613.2L475.7 591.5M508.6 604.4L532.7 583.9M508.6 604.4L475.7 591.5M508.6 604.4L502.7 573M532.7 583.9L560.4 557.6M532.7 583.9L502.7 573M532.7 583.9L532.5 554.2M560.4 557.6L574 544M560.4 557.6L532.5 554.2M560.4 557.6L555.6 536.6M574 544L589.2 523.6M574 544L555.6 536.6M574 544L572.8 517M589.2 523.6L572.8 517M589.2 523.6L609.1 516.7M589.2 523.6L594.7 508M437.1 608.6L454.2 599.1M437.1 608.6L419.3 615.4M437.1 608.6L420.5 587.6M454.2 599.1L475.7 591.5M475.7 591.5L502.7 573M572.8 517L594.7 508M505.2 498.7L528.7 487.9M505.2 498.7L506.9 488.7M505.2 498.7L519.3 483.5M528.7 487.9L540.9 483.9M485.1 495.7L506.9 488.7M485.1 495.7L500.4 483.2M485.1 495.7L488.3 486.7M506.9 488.7L519.3 483.5M506.9 488.7L500.4 483.2M506.9 488.7L512.2 480M519.3 483.5L512.2 480M500.4 483.2L512.2 480M500.4 483.2L488.3 486.7M419.3 615.4L420.5 587.6M419.3 615.4L404.5 594.8M420.5 587.6L404.5 594.8M471.2 498L488.3 486.7M471.2 498L474.9 488.6M488.3 486.7L497.8 477.2M488.3 486.7L474.9 488.6M488.3 486.7L486.6 479.4M405.6 622L404.5 594.8M404.5 594.8L393.1 601M404.5 594.8L397.3 568.7M453.3 505L474.9 488.6M453.3 505L439 509.2M453.3 505L458.8 492.7M474.9 488.6L486.6 479.4M474.9 488.6L458.8 492.7M474.9 488.6L477.7 481M393.1 601L397.3 568.7M397.3 568.7L410.9 537.6M397.3 568.7L385.8 577.4M397.3 568.7L397.2 547.1M410.9 537.6L439 509.2M410.9 537.6L397.2 547.1M410.9 537.6L424.9 515.2M439 509.2L458.8 492.7M439 509.2L424.9 515.2M439 509.2L447.7 494.8M458.8 492.7L477.7 481M458.8 492.7L447.7 494.8M458.8 492.7L467.6 483M477.7 481L467.6 483M477.7 481L477.9 472M385.8 577.4L397.2 547.1M397.2 547.1L424.9 515.2M424.9 515.2L447.7 494.8M447.7 494.8L467.6 483M467.6 483L477.9 472M467.6 483L468.7 475.1M455.4 486.7L468.7 475.1M634.5 487.7L621 471.5M640.5 460.7L644.2 427.2M640.5 460.7L621 471.5M640.5 460.7L624.8 441.1M644.2 427.2L646.7 397.8M644.2 427.2L624.8 441.1M644.2 427.2L629.2 406.6M646.7 397.8L642.8 371.2M646.7 397.8L629.2 406.6M646.7 397.8L627.3 379.7M642.8 371.2L644.5 351.2M642.8 371.2L627.3 379.7M642.8 371.2L620.7 356.8M642.8 371.2L660.9 363.8M642.8 371.2L661 387.5M644.5 351.2L631.8 330.7M644.5 351.2L654.7 340.3M644.5 351.2L660.9 363.8M631.8 330.7L638.9 323.8M631.8 330.7L654.7 340.3M609.1 516.7L611.3 496.8M609.1 516.7L594.7 508M611.3 496.8L621 471.5M611.3 496.8L594.7 508M611.3 496.8L592.5 484.2M621 471.5L624.8 441.1M621 471.5L592.5 484.2M624.8 441.1L629.2 406.6M594.7 508L592.5 484.2M552.6 455.4L540.9 483.9M548.3 439.9L538.4 467.4M548.3 439.9L536 452.5M530.1 468.3L524 465.3M528.9 457.2L524 465.3M504.7 451.2L503.9 441.2M504.7 451.2L499.4 451M504.7 451.2L508.2 439.7M504.7 451.2L511.2 446.6M503.9 441.2L499.4 451M503.9 441.2L498.8 445.1M503.9 441.2L507.3 431.4M503.9 441.2L508.2 439.7M497.6 456.3L499.4 451M497.6 456.3L488.3 456.5M499.4 451L498.8 445.1M499.4 451L488.3 456.5M499.4 451L490.1 450.9M498.8 445.1L490.1 450.9M486.3 462.5L488.3 456.5M486.3 462.5L478.9 464.1M488.3 456.5L490.1 450.9M488.3 456.5L478.9 464.1M488.3 456.5L480 457.9M490.1 450.9L480 457.9M477.9 472L478.9 464.1M477.9 472L468.7 475.1M478.9 464.1L480 457.9M478.9 464.1L468.7 475.1M478.9 464.1L469.8 467.2M480 457.9L469.8 467.2M468.7 475.1L469.8 467.2M645.9 311.9L619.4 312.3M638.9 323.8L654.7 340.3M638.9 323.8L619.4 312.3M638.9 323.8L612.9 321.2M598.7 297.9L572 312.4M598.7 297.9L599.5 307.5M572 312.4L548.5 339.7M572 312.4L599.5 307.5M572 312.4L570.3 324.9M548.5 339.7L570.3 324.9M548.5 339.7L546.9 350.7M627.2 301.9L599.5 307.5M627.2 301.9L619.4 312.3M599.5 307.5L619.4 312.3M570.3 324.9L546.9 350.7M507.3 431.4L508.2 439.7M507.3 431.4L516 425.8M508.2 439.7L511.2 446.6M508.2 439.7L516 425.8M508.2 439.7L516 436.6M511.2 446.6L516 436.6M511.2 446.6L517.7 445.5M516 425.8L516 436.6M516 436.6L517.7 445.5M517.7 445.5L521 456.2M531.1 390.2L546.9 350.7M531.1 390.2L546.3 365.9M533.2 400.4L546.3 365.9M533.2 400.4L548.5 380.8M533.8 418.4L548.5 380.8"/>
<path stroke="#148214" d="M437.1 608.6L434.8 579.6M454.2 599.1L434.8 579.6M454.2 599.1L455.6 567.4M475.7 591.5L455.6 567.4M475.7 591.5L478.3 561.5M502.7 573L532.5 554.2M502.7 573L478.3 561.5M532.5 554.2L555.6 536.6M555.6 536.6L572.8 517M572.8 517L573.7 495.1M434.8 579.6L455.6 567.4M434.8 579.6L420.5 587.6M434.8 579.6L427.5 548.9M535.8 494.7L528.7 487.9M535.8 494.7L540.9 483.9M464.5 514.6L485.1 495.7M464.5 514.6L471.2 498M487.2 503.4L505.2 498.7M487.2 503.4L485.1 495.7M487.2 503.4L506.9 488.7M485.1 495.7L471.2 498M519.3 483.5L521.1 476.7M500.4 483.2L506.4 476.3M500.4 483.2L497.8 477.2M512.2 480L506.4 476.3M512.2 480L521.1 476.7M512.2 480L516.2 471.7M506.4 476.3L497.8 477.2M506.4 476.3L516.2 471.7M506.4 476.3L507.2 468.7M420.5 587.6L427.5 548.9M420.5 587.6L410 561M427.5 548.9L445.1 524.6M427.5 548.9L410 561M427.5 548.9L426.3 531.9M445.1 524.6L471.2 498M445.1 524.6L426.3 531.9M445.1 524.6L453.3 505M471.2 498L453.3 505M497.8 477.2L486.6 479.4M497.8 477.2L507.2 468.7M497.8 477.2L496.2 470.1M404.5 594.8L410 561M410 561L426.3 531.9M410 561L397.3 568.7M410 561L410.9 537.6M426.3 531.9L453.3 505M426.3 531.9L410.9 537.6M426.3 531.9L439 509.2M486.6 479.4L477.7 481M486.6 479.4L496.2 470.1M486.6 479.4L486.1 470.4M477.7 481L486.1 470.4M644.5 351.2L620.7 356.8M644.5 351.2L614.3 338.6M631.8 330.7L614.3 338.6M631.8 330.7L612.9 321.2M621 471.5L603.1 455.8M624.8 441.1L603.1 455.8M624.8 441.1L602.5 421.7M629.2 406.6L627.3 379.7M629.2 406.6L602.5 421.7M627.3 379.7L620.7 356.8M620.7 356.8L614.3 338.6M614.3 338.6L612.9 321.2M614.3 338.6L591.5 331.7M594.7 508L573.7 495.1M592.5 484.2L603.1 455.8M592.5 484.2L573.7 495.1M555.8 479.4L552.6 455.4M555.8 479.4L540.9 483.9M552.6 455.4L548.3 439.9M547.1 418.2L536 452.5M547.1 418.2L534.6 431.9M546.7 401.1L534.6 431.9M546.7 401.1L533.8 418.4M530.1 468.3L521.1 476.7M524 465.3L516.2 471.7M524 465.3L521 456.2M516.2 471.7L507.2 468.7M507.2 468.7L506.4 463.3M507.2 468.7L496.2 470.1M507.2 468.7L516 466M506.4 463.3L506.1 456.8M506.4 463.3L496.2 470.1M506.4 463.3L495.2 463.9M506.4 463.3L513.6 456.7M506.1 456.8L504.7 451.2M506.1 456.8L495.2 463.9M506.1 456.8L497.6 456.3M506.1 456.8L511.2 446.6M506.1 456.8L513.6 456.7M504.7 451.2L497.6 456.3M496.2 470.1L495.2 463.9M496.2 470.1L486.1 470.4M495.2 463.9L497.6 456.3M495.2 463.9L486.1 470.4M495.2 463.9L486.3 462.5M497.6 456.3L486.3 462.5M486.1 470.4L486.3 462.5M486.1 470.4L477.9 472M486.3 462.5L477.9 472M599.5 307.5L570.3 324.9M599.5 307.5L593.5 318.7M570.3 324.9L593.5 318.7M570.3 324.9L570.7 334M619.4 312.3L593.5 318.7M619.4 312.3L612.9 321.2M593.5 318.7L612.9 321.2M593.5 318.7L570.7 334M593.5 318.7L591.5 331.7M612.9 321.2L591.5 331.7M511.2 446.6L513.6 456.7M513.6 456.7L517.7 445.5M513.6 456.7L521 456.2M516 466L521 456.2M546.9 350.7L546.3 365.9M546.9 350.7L570.7 334M546.3 365.9L548.5 380.8M546.3 365.9L570.7 334M546.3 365.9L572.7 345.8M570.7 334L591.5 331.7"/>
<path stroke="#148c14" d="M434.8 579.6L444.1 542.8M455.6 567.4L444.1 542.8M444.1 542.8L464.5 514.6M444.1 542.8L427.5 548.9M444.1 542.8L445.1 524.6M535.8 494.7L555.8 479.4M464.5 514.6L487.2 503.4M464.5 514.6L445.1 524.6M629.2 406.6L604.3 388.4M627.3 379.7L604.3 388.4M627.3 379.7L598.3 367.2M620.7 356.8L598.3 367.2M620.7 356.8L592.4 349.5M614.3 338.6L592.4 349.5M603.1 455.8L602.5 421.7M592.4 349.5L572.7 345.8M592.4 349.5L591.5 331.7M573.7 495.1L555.8 479.4M548.3 439.9L547.1 418.2M547.1 418.2L546.7 401.1M546.7 401.1L548.5 380.8M521.1 476.7L524 465.3M521.1 476.7L516.2 471.7M524 465.3L516 466M516.2 471.7L516 466M506.4 463.3L516 466M513.6 456.7L516 466M548.5 380.8L572.7 345.8M570.7 334L572.7 345.8M572.7 345.8L591.5 331.7"/>
<path stroke="#1e8c1e" d="M502.7 573L505.2 538.8M532.5 554.2L505.2 538.8M532.5 554.2L527.4 529.3M555.6 536.6L527.4 529.3M555.6 536.6L555.5 510.3M572.8 517L555.5 510.3M455.6 567.4L478.3 561.5M527.4 529.3L535.8 494.7M555.5 510.3L535.8 494.7M555.5 510.3L573.7 495.1M555.5 510.3L555.8 479.4M592.5 484.2L576.8 470.8M602.5 421.7L604.3 388.4M576.8 470.8L552.6 455.4M538.4 467.4L532.4 479.4"/>
<path stroke="#1e961e" d="M455.6 567.4L462.6 539.4M478.3 561.5L505.2 538.8M505.2 538.8L527.4 529.3M527.4 529.3L555.5 510.3M528.7 487.9L532.4 479.4M519.3 483.5L532.4 479.4M603.1 455.8L576.8 470.8M604.3 388.4L598.3 367.2M598.3 367.2L592.4 349.5M598.3 367.2L571.3 366.8M592.4 349.5L571.3 366.8M573.7 495.1L576.8 470.8M576.8 470.8L555.8 479.4M571.3 366.8L546.7 401.1M571.3 366.8L548.5 380.8M571.3 366.8L572.7 345.8M540.9 483.9L532.4 479.4M532.4 479.4L530.1 468.3"/>
<path stroke="#1ea01e" d="M444.1 542.8L462.6 539.4M462.6 539.4L464.5 514.6M462.6 539.4L487.2 503.4"/>
<path stroke="#28a028" d="M478.3 561.5L462.6 539.4M603.1 455.8L577.2 436.6M577.2 436.6L552.6 455.4M532.4 479.4L521.1 476.7"/>
<path stroke="#28aa28" d="M602.5 421.7L577.2 436.6M577.2 436.6L548.3 439.9"/>
<path stroke="#32aa32" d="M488.1 521.7L505.2 498.7M509 512.3L528.7 487.9"/>
<path stroke="#32b432" d="M478.3 561.5L488.1 521.7M505.2 538.8L488.1 521.7M488.1 521.7L487.2 503.4M509 512.3L535.8 494.7M509 512.3L505.2 498.7M576.8 470.8L577.2 436.6M575.4 385.1L546.7 401.1"/>
<path stroke="#32be32" d="M505.2 538.8L509 512.3M604.3 388.4L575.4 385.1M598.3 367.2L575.4 385.1M575.4 385.1L571.3 366.8M575.4 385.1L547.1 418.2"/>
<path stroke="#3cbe3c" d="M527.4 529.3L509 512.3M462.6 539.4L488.1 521.7"/>
<path stroke="#3cc83c" d="M602.5 421.7L576.5 408.4M604.3 388.4L576.5 408.4M576.5 408.4L548.3 439.9M576.5 408.4L547.1 418.2"/>
<path stroke="#46dc46" d="M488.1 521.7L509 512.3"/>
<path stroke="#50e650" d="M577.2 436.6L576.5 408.4"/>
<path stroke="#5af05a" d="M576.5 408.4L575.4 385.1"/>
</g>
<g font-family="Liberation Sans" font-size="18" fill="#000" text-anchor="middle">
<text x="420" y="403">3</text>
<text x="476" y="448">1</text>
<text x="592" y="410">5</text>
<text x="473" y="577">4</text>
</g></svg></div>
<div id="rp" class="a">
 <div style="position:absolute;left:-956px;top:-30px;width:1920px;height:1084px">
 <div class="t" style="left:1385px;top:42px;font-size:21px;font-weight:bold;line-height:24px">Alpha MOs</div>
 <div class="ln" style="left:1365px;top:101px"></div>
<div class="bx" style="left:1380px;top:87px"></div>
<div class="nm" style="left:1297px;top:93.9px">35</div>
<div class="en" style="left:1396px;top:94.2px">4.42252</div>
<div class="ln" style="left:1113px;top:134px"></div>
<div class="bx" style="left:1128px;top:120px"></div>
<div class="nm" style="left:1045px;top:126.2px">32</div>
<div class="en" style="left:1144px;top:126.5px">3.42029</div>
<div class="ln" style="left:1365px;top:134px"></div>
<div class="bx" style="left:1380px;top:120px"></div>
<div class="nm" style="left:1297px;top:126.2px">33</div>
<div class="en" style="left:1396px;top:126.5px">3.42029</div>
<div class="ln" style="left:1617px;top:134px"></div>
<div class="bx" style="left:1632px;top:120px"></div>
<div class="nm" style="left:1549px;top:126.2px">34</div>
<div class="en" style="left:1648px;top:126.5px">3.42029</div>
<div class="ln" style="left:1365px;top:166px"></div>
<div class="bx" style="left:1380px;top:152px"></div>
<div class="nm" style="left:1297px;top:158.5px">31</div>
<div class="en" style="left:1396px;top:158.8px">3.11513</div>
<div class="ln" style="left:1239px;top:198px"></div>
<div class="bx" style="left:1254px;top:184px"></div>
<div class="nm" style="left:1171px;top:190.8px">29</div>
<div class="en" style="left:1270px;top:191.1px">2.91115</div>
<div class="ln" style="left:1491px;top:198px"></div>
<div class="bx" style="left:1506px;top:184px"></div>
<div class="nm" style="left:1423px;top:190.8px">30</div>
<div class="en" style="left:1522px;top:191.1px">2.91115</div>
<div class="ln" style="left:1113px;top:231px"></div>
<div class="bx" style="left:1128px;top:217px"></div>
<div class="nm" style="left:1045px;top:223.1px">26</div>
<div class="en" style="left:1144px;top:223.4px">2.62978</div>
<div class="ln" style="left:1365px;top:231px"></div>
<div class="bx" style="left:1380px;top:217px"></div>
<div class="nm" style="left:1297px;top:223.1px">27</div>
<div class="en" style="left:1396px;top:223.4px">2.62978</div>
<div class="ln" style="left:1617px;top:231px"></div>
<div class="bx" style="left:1632px;top:217px"></div>
<div class="nm" style="left:1549px;top:223.1px">28</div>
<div class="en" style="left:1648px;top:223.4px">2.62978</div>
<div class="ln" style="left:987px;top:263px"></div>
<div class="bx" style="left:1002px;top:249px"></div>
<div class="nm" style="left:919px;top:255.4px">21</div>
<div class="en" style="left:1018px;top:255.7px">2.04813</div>
<div class="ln" style="left:1239px;top:263px"></div>
<div class="bx" style="left:1254px;top:249px"></div>
<div class="nm" style="left:1171px;top:255.4px">22</div>
<div class="en" style="left:1270px;top:255.7px">2.04813</div>
<div class="ln" style="left:1491px;top:263px"></div>
<div class="bx" style="left:1506px;top:249px"></div>
<div class="nm" style="left:1423px;top:255.4px">23</div>
<div class="en" style="left:1522px;top:255.7px">2.05166</div>
<div class="ln" style="left:1743px;top:263px"></div>
<div class="bx" style="left:1758px;top:249px"></div>
<div class="nm" style="left:1675px;top:255.4px">24</div>
<div class="en" style="left:1774px;top:255.7px">2.05166</div>
<div class="ln" style="left:1239px;top:295px"></div>
<div class="bx" style="left:1254px;top:281px"></div>
<div class="nm" style="left:1171px;top:287.7px">18</div>
<div class="en" style="left:1270px;top:288.0px">1.36343</div>
<div class="ln" style="left:1491px;top:295px"></div>
<div class="bx" style="left:1506px;top:281px"></div>
<div class="nm" style="left:1423px;top:287.7px">19</div>
<div class="en" style="left:1522px;top:288.0px">1.36343</div>
<div class="ln" style="left:1365px;top:328px"></div>
<div class="bx" style="left:1380px;top:314px"></div>
<div class="nm" style="left:1297px;top:320.0px">17</div>
<div class="en" style="left:1396px;top:320.3px">1.10029</div>
<div class="ln" style="left:1365px;top:360px"></div>
<div class="bx" style="left:1380px;top:346px"></div>
<div class="nm" style="left:1297px;top:352.3px">16</div>
<div class="en" style="left:1396px;top:352.6px">0.92231</div>
<div class="ln" style="left:1113px;top:392px"></div>
<div class="bx" style="left:1128px;top:378px"></div>
<div class="nm" style="left:1045px;top:384.6px">13</div>
<div class="en" style="left:1144px;top:384.9px">0.87434</div>
<div class="ln" style="left:1365px;top:392px"></div>
<div class="bx" style="left:1380px;top:378px"></div>
<div class="nm" style="left:1297px;top:384.6px">14</div>
<div class="en" style="left:1396px;top:384.9px">0.87434</div>
<div class="ln" style="left:1617px;top:392px"></div>
<div class="bx" style="left:1632px;top:378px"></div>
<div class="nm" style="left:1549px;top:384.6px">15</div>
<div class="en" style="left:1648px;top:384.9px">0.87434</div>
<div class="ln" style="left:1113px;top:424px"></div>
<div class="bx" style="left:1128px;top:410px"></div>
<div class="nm" style="left:1045px;top:416.9px">10</div>
<div class="en" style="left:1144px;top:417.2px">0.52916</div>
<div class="ln" style="left:1365px;top:424px"></div>
<div class="bx" style="left:1380px;top:410px"></div>
<div class="nm" style="left:1297px;top:416.9px">11</div>
<div class="en" style="left:1396px;top:417.2px">0.52916</div>
<div class="ln" style="left:1617px;top:424px"></div>
<div class="bx" style="left:1632px;top:410px"></div>
<div class="nm" style="left:1549px;top:416.9px">12</div>
<div class="en" style="left:1648px;top:417.2px">0.52916</div>
<div class="ln" style="left:1113px;top:457px"></div>
<div class="bx" style="left:1128px;top:443px"></div>
<div class="nm" style="left:1045px;top:449.2px">7</div>
<div class="en" style="left:1144px;top:449.5px">0.17675</div>
<div class="ln" style="left:1365px;top:457px"></div>
<div class="bx" style="left:1380px;top:443px"></div>
<div class="nm" style="left:1297px;top:449.2px">8</div>
<div class="en" style="left:1396px;top:449.5px">0.17675</div>
<div class="ln" style="left:1617px;top:457px"></div>
<div class="bx" style="left:1632px;top:443px"></div>
<div class="nm" style="left:1549px;top:449.2px">9</div>
<div class="en" style="left:1648px;top:449.5px">0.17675</div>
<div class="yl" style="left:1340px;top:474px"></div>
<div class="sq" style="left:1512px;top:484px"></div>
<div class="ln" style="left:1365px;top:489px"></div>
<div class="bx" style="left:1380px;top:475px"></div>
<div class="nm" style="left:1297px;top:481.5px">6</div>
<div class="en" style="left:1396px;top:481.8px">0.11822</div>
<div class="yl" style="left:1088px;top:506px"></div>
<div class="sq" style="left:1260px;top:516px"></div>
<div class="ln" style="left:1113px;top:521px"></div>
<div class="bx" style="left:1128px;top:507px"></div>
<svg class="ar" style="left:1128px;top:507px" width="25" height="26"><path d="M8.5 22V4.5L4 12M16.5 4.5V22L21 14.5"/></svg>
<div class="nm" style="left:1045px;top:513.8px">3</div>
<div class="en" style="left:1144px;top:514.1px">&#8722;0.38830</div>
<div class="yl" style="left:1340px;top:506px"></div>
<div class="sqr" style="left:1512px;top:516px"></div>
<div class="ln" style="left:1365px;top:521px"></div>
<div class="bx" style="left:1380px;top:507px"></div>
<svg class="ar" style="left:1380px;top:507px" width="25" height="26"><path d="M8.5 22V4.5L4 12M16.5 4.5V22L21 14.5"/></svg>
<div class="nm" style="left:1297px;top:513.8px">4</div>
<div class="en" style="left:1396px;top:514.1px">&#8722;0.38830</div>
<div class="yl" style="left:1592px;top:506px"></div>
<div class="sq" style="left:1764px;top:516px"></div>
<div class="ln" style="left:1617px;top:521px"></div>
<div class="bx" style="left:1632px;top:507px"></div>
<svg class="ar" style="left:1632px;top:507px" width="25" height="26"><path d="M8.5 22V4.5L4 12M16.5 4.5V22L21 14.5"/></svg>
<div class="nm" style="left:1549px;top:513.8px">5</div>
<div class="en" style="left:1648px;top:514.1px">&#8722;0.38830</div>
<div class="yl" style="left:1340px;top:539px"></div>
<div class="sq" style="left:1512px;top:549px"></div>
<div class="ln" style="left:1365px;top:554px"></div>
<div class="bx" style="left:1380px;top:540px"></div>
<svg class="ar" style="left:1380px;top:540px" width="25" height="26"><path d="M8.5 22V4.5L4 12M16.5 4.5V22L21 14.5"/></svg>
<div class="nm" style="left:1297px;top:546.1px">2</div>
<div class="en" style="left:1396px;top:546.4px">&#8722;0.69039</div>
<div class="yl" style="left:1340px;top:571px"></div>
<div class="sq" style="left:1512px;top:581px"></div>
<div class="ln" style="left:1365px;top:586px"></div>
<div class="bx" style="left:1380px;top:572px"></div>
<svg class="ar" style="left:1380px;top:572px" width="25" height="26"><path d="M8.5 22V4.5L4 12M16.5 4.5V22L21 14.5"/></svg>
<div class="nm" style="left:1297px;top:578.4px">1</div>
<div class="en" style="left:1396px;top:578.7px">&#8722;10.16709</div>
 <div class="a" style="left:955px;top:502px;width:960px;height:2px;background:repeating-linear-gradient(90deg,#00f000 0 2px,transparent 2px 4px)"></div>
 <div class="a" style="left:956px;top:848px;width:958px;height:17px;background:#ebebeb"></div>
 <div class="a" style="left:1135px;top:848px;width:600px;height:16px;border:1px solid #979797;border-radius:2px;background:linear-gradient(#f1f1f1,#e3e3e3 50%,#d3d3d3 51%,#c9c9c9)"></div>
 <svg class="a" style="left:959px;top:850px" width="10" height="12"><path d="M7 2V10L2.5 6Z" fill="#333"/></svg>
 <svg class="a" style="left:1900px;top:850px" width="10" height="12"><path d="M3 2V10L7.5 6Z" fill="#333"/></svg>
 </div>
</div>
<div class="inp" style="left:54px;top:876px;width:29px;height:20px"></div>
<div class="inp" style="left:129px;top:876px;width:71px;height:19px"></div>
<div class="a" style="left:183px;top:877px;width:16px;height:17px;border:1px solid #707070;background:linear-gradient(#f2f2f2,#ebebeb 50%,#ddd 51%,#cfcfcf)"></div>
<svg class="a" style="left:185px;top:882px" width="12" height="8"><path d="M2 2H10L6 6.5Z" fill="#000"/></svg>
<div class="tab" style="left:6px;width:69px"></div>
<div class="tab" style="left:75px;width:63px"></div>
<div class="tab" style="left:138px;width:74px"></div>
<div class="a" style="left:5px;top:930px;width:1910px;height:109px;background:#fff;border:1px solid #898c95;border-bottom:none"></div>
<div class="tab" style="left:211px;top:906px;width:63px;height:25px;background:#fff"></div>
<div class="inp" style="left:678px;top:952px;width:41px;height:20px"></div>
<div class="btn" style="left:588px;top:994px;width:78px;height:22px"></div>
<div class="btn" style="left:1275px;top:951px;width:84px;height:22px"></div>
<svg class="a" style="left:1347px;top:957px" width="10" height="8"><path d="M1.5 1.5H9L5.25 6Z" fill="#000"/></svg>
<div class="btn" style="left:1249px;top:994px;width:83px;height:22px"></div>
<div class="a" style="left:5px;top:1045px;width:1910px;height:2px;background:#a0a0a0;border-bottom:1px solid #fff"></div>
<div class="btn" style="left:836px;top:1054px;width:78px;height:22px"></div>
<div class="btn" style="left:921px;top:1054px;width:78px;height:22px"></div>
<div class="btn" style="left:1006px;top:1054px;width:78px;height:22px"></div>
<div class="a" style="left:0;top:1082px;width:1920px;height:2px;background:#fff;border-bottom:1px solid #555"></div>
<svg class="a" style="left:0;top:0" width="1920" height="1084" font-family="Liberation Sans">
<text x="25.9" y="15.6" font-size="13" font-weight="normal" fill="#000" textLength="70.7" lengthAdjust="spacingAndGlyphs">G2:M1 - MOs</text>
<text x="13.9" y="43.3" font-size="12" font-weight="normal" fill="#000" textLength="77.7" lengthAdjust="spacingAndGlyphs">Current Surface:</text>
<text x="20.4" y="846.0" font-size="12" font-weight="normal" fill="#000" textLength="157.2" lengthAdjust="spacingAndGlyphs">MO ( (MO = 4) ; Isovalue = 0.02 )</text>
<text x="9.7" y="890.0" font-size="12" font-weight="normal" fill="#000" textLength="38.1" lengthAdjust="spacingAndGlyphs">Charge:</text>
<text x="56.9" y="890.0" font-size="12" font-weight="normal" fill="#000" textLength="6.4" lengthAdjust="spacingAndGlyphs">0</text>
<text x="98.6" y="890.0" font-size="12" font-weight="normal" fill="#000" textLength="24.1" lengthAdjust="spacingAndGlyphs">Spin:</text>
<text x="133.8" y="889.2" font-size="12" font-weight="normal" fill="#000" textLength="31.5" lengthAdjust="spacingAndGlyphs">Singlet</text>
<text x="217.0" y="890.4" font-size="12" font-weight="normal" fill="#000" textLength="486.3" lengthAdjust="spacingAndGlyphs">Gaussian MOs from:  //icnas1.cc.ic.ac.uk/jhm116/1styearlab/JHMoore_CH4_optf_pop(3).chk</text>
<text x="13.6" y="922.7" font-size="12" font-weight="normal" fill="#000" textLength="47.1" lengthAdjust="spacingAndGlyphs">New MOs</text>
<text x="82.7" y="922.7" font-size="12" font-weight="normal" fill="#000" textLength="40.9" lengthAdjust="spacingAndGlyphs">Visualize</text>
<text x="145.1" y="922.7" font-size="12" font-weight="normal" fill="#000" textLength="52.5" lengthAdjust="spacingAndGlyphs">Calculation</text>
<text x="219.7" y="922.3" font-size="12" font-weight="normal" fill="#000" textLength="39.2" lengthAdjust="spacingAndGlyphs">Diagram</text>
<text x="560.8" y="966.0" font-size="12" font-weight="normal" fill="#000" textLength="111.6" lengthAdjust="spacingAndGlyphs">Degeneracy Threshold:</text>
<text x="680.5" y="967.0" font-size="12" font-weight="normal" fill="#000" textLength="21.0" lengthAdjust="spacingAndGlyphs">0.01</text>
<text x="596.7" y="1008.8" font-size="12" font-weight="normal" fill="#000" textLength="60.0" lengthAdjust="spacingAndGlyphs">Save Data...</text>
<text x="1282.6" y="965.3" font-size="12" font-weight="normal" fill="#000" textLength="62.2" lengthAdjust="spacingAndGlyphs">Arrange MOs</text>
<text x="1252.3" y="1008.5" font-size="12" font-weight="normal" fill="#000" textLength="75.5" lengthAdjust="spacingAndGlyphs">Export Picture...</text>
<text x="867.2" y="1069.1" font-size="12" font-weight="normal" fill="#000" textLength="14.4" lengthAdjust="spacingAndGlyphs">Ok</text>
<text x="941.9" y="1069.1" font-size="12" font-weight="normal" fill="#000" textLength="34.0" lengthAdjust="spacingAndGlyphs">Cancel</text>
<text x="1033.5" y="1069.1" font-size="12" font-weight="normal" fill="#000" textLength="22.2" lengthAdjust="spacingAndGlyphs">Help</text>
</svg>

</body></html>
